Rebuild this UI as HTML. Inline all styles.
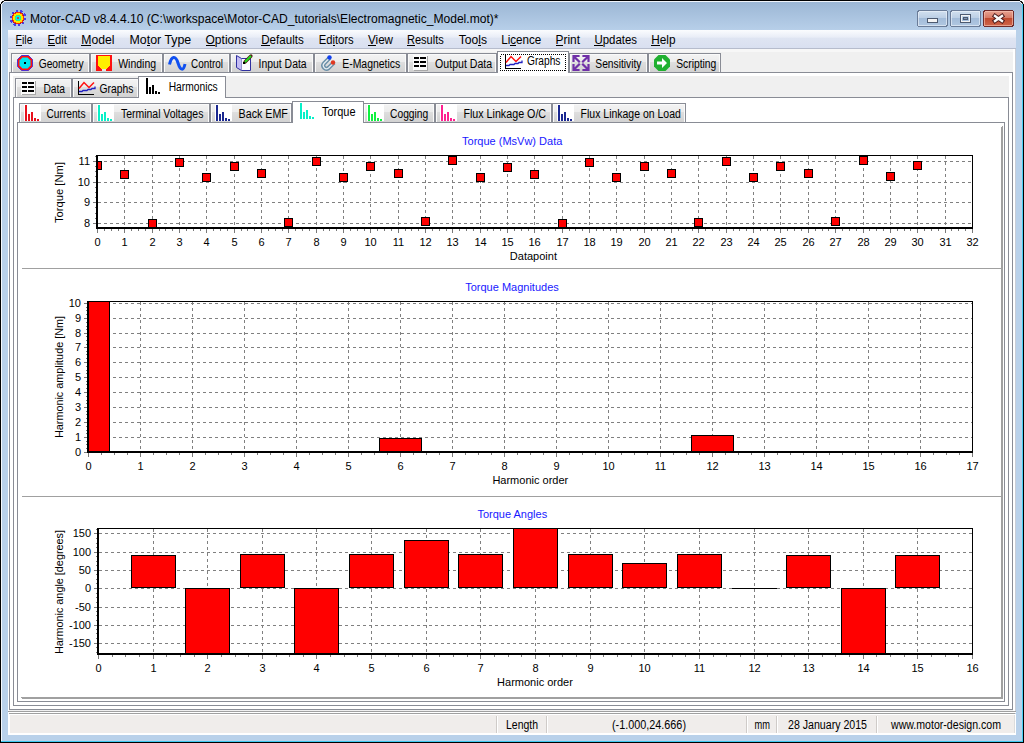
<!DOCTYPE html>
<html><head><meta charset="utf-8"><style>
html,body{margin:0;padding:0;width:1024px;height:743px;overflow:hidden;background:#b9d1ea}
svg{display:block;font-family:"Liberation Sans",sans-serif}
text{font-family:"Liberation Sans",sans-serif}
</style></head><body>
<svg width="1024" height="743" viewBox="0 0 1024 743" shape-rendering="crispEdges" text-rendering="optimizeLegibility">
<rect x="0" y="0" width="1024" height="743" fill="#000" />
<rect x="1" y="1" width="1022" height="741" fill="#b9d1ea" />
<rect x="1" y="1" width="1" height="741" fill="#f4f8fc" />
<defs><linearGradient id="tg" x1="0" y1="0" x2="0" y2="1"><stop offset="0" stop-color="#9bb6d4"/><stop offset="1" stop-color="#b7cfe9"/></linearGradient><linearGradient id="mg" x1="0" y1="0" x2="0" y2="1"><stop offset="0" stop-color="#fbfcfe"/><stop offset="0.4" stop-color="#e9edf7"/><stop offset="0.45" stop-color="#dfe5f2"/><stop offset="1" stop-color="#d9e0f0"/></linearGradient><linearGradient id="tab" x1="0" y1="0" x2="0" y2="1"><stop offset="0" stop-color="#f4f4f4"/><stop offset="0.48" stop-color="#ececec"/><stop offset="0.5" stop-color="#dedede"/><stop offset="1" stop-color="#d2d2d2"/></linearGradient><linearGradient id="btn" x1="0" y1="0" x2="0" y2="1"><stop offset="0" stop-color="#d3e1f0"/><stop offset="0.45" stop-color="#bccfe5"/><stop offset="0.5" stop-color="#a3bcd9"/><stop offset="1" stop-color="#b1c8e2"/></linearGradient><linearGradient id="cls" x1="0" y1="0" x2="0" y2="1"><stop offset="0" stop-color="#e8a493"/><stop offset="0.45" stop-color="#d77b66"/><stop offset="0.5" stop-color="#c04a2f"/><stop offset="1" stop-color="#d0674c"/></linearGradient></defs>
<rect x="2" y="1" width="1021" height="29" fill="url(#tg)" />
<rect x="1" y="1" width="1021" height="1" fill="#f0f4fa" />
<rect x="1022" y="1" width="1" height="741" fill="#48d0f4" />
<rect x="0" y="0" width="1" height="1" fill="#fff" />
<rect x="1023" y="0" width="1" height="1" fill="#fff" />
<rect x="1" y="0" width="1" height="1" fill="#fff" />
<rect x="1022" y="0" width="1" height="1" fill="#fff" />
<rect x="2" y="0" width="1" height="1" fill="#fff" />
<rect x="1021" y="0" width="1" height="1" fill="#fff" />
<rect x="3" y="0" width="1" height="1" fill="#e8e8e8" />
<rect x="1020" y="0" width="1" height="1" fill="#e8e8e8" />
<rect x="0" y="1" width="1" height="1" fill="#fff" />
<rect x="1023" y="1" width="1" height="1" fill="#fff" />
<rect x="1" y="1" width="1" height="1" fill="#f0f0f0" />
<rect x="1022" y="1" width="1" height="1" fill="#f0f0f0" />
<rect x="0" y="2" width="1" height="1" fill="#fff" />
<rect x="1023" y="2" width="1" height="1" fill="#fff" />
<rect x="0" y="3" width="1" height="1" fill="#e0e0e0" />
<rect x="1023" y="3" width="1" height="1" fill="#e0e0e0" />
<rect x="2" y="1" width="1" height="1" fill="#101010" />
<rect x="1021" y="1" width="1" height="1" fill="#101010" />
<rect x="3" y="1" width="1" height="1" fill="#202020" />
<rect x="1020" y="1" width="1" height="1" fill="#202020" />
<rect x="1" y="2" width="1" height="1" fill="#101010" />
<rect x="1022" y="2" width="1" height="1" fill="#101010" />
<rect x="1" y="3" width="1" height="1" fill="#202020" />
<rect x="1022" y="3" width="1" height="1" fill="#202020" />
<rect x="2" y="2" width="1" height="1" fill="#202020" />
<rect x="1021" y="2" width="1" height="1" fill="#202020" />
<rect x="3" y="2" width="1" height="1" fill="#e8f0f8" />
<rect x="1020" y="2" width="1" height="1" fill="#e8f0f8" />
<rect x="2" y="3" width="1" height="1" fill="#e8f0f8" />
<rect x="1021" y="3" width="1" height="1" fill="#e8f0f8" />
<rect x="16" y="10" width="1" height="1" fill="#4a40e8" />
<rect x="17" y="10" width="1" height="1" fill="#4a40e8" />
<rect x="20" y="10" width="1" height="1" fill="#4a40e8" />
<rect x="21" y="10" width="1" height="1" fill="#4a40e8" />
<rect x="16" y="11" width="1" height="1" fill="#4a40e8" />
<rect x="17" y="11" width="1" height="1" fill="#4a40e8" />
<rect x="20" y="11" width="1" height="1" fill="#4a40e8" />
<rect x="21" y="11" width="1" height="1" fill="#4a40e8" />
<rect x="22" y="11" width="1" height="1" fill="#4a40e8" />
<rect x="12" y="12" width="1" height="1" fill="#4a40e8" />
<rect x="13" y="12" width="1" height="1" fill="#4a40e8" />
<rect x="15" y="12" width="1" height="1" fill="#a01838" />
<rect x="16" y="12" width="1" height="1" fill="#ff3000" />
<rect x="17" y="12" width="1" height="1" fill="#ff3000" />
<rect x="18" y="12" width="1" height="1" fill="#ff3000" />
<rect x="19" y="12" width="1" height="1" fill="#ff3000" />
<rect x="20" y="12" width="1" height="1" fill="#a01838" />
<rect x="21" y="12" width="1" height="1" fill="#4a40e8" />
<rect x="12" y="13" width="1" height="1" fill="#4a40e8" />
<rect x="13" y="13" width="1" height="1" fill="#a01838" />
<rect x="14" y="13" width="1" height="1" fill="#ff3000" />
<rect x="15" y="13" width="1" height="1" fill="#ff3000" />
<rect x="16" y="13" width="1" height="1" fill="#ffe400" />
<rect x="17" y="13" width="1" height="1" fill="#ffe400" />
<rect x="18" y="13" width="1" height="1" fill="#ffe400" />
<rect x="19" y="13" width="1" height="1" fill="#ffe400" />
<rect x="20" y="13" width="1" height="1" fill="#ff3000" />
<rect x="21" y="13" width="1" height="1" fill="#ff3000" />
<rect x="22" y="13" width="1" height="1" fill="#a01838" />
<rect x="24" y="13" width="1" height="1" fill="#4a40e8" />
<rect x="13" y="14" width="1" height="1" fill="#ff3000" />
<rect x="14" y="14" width="1" height="1" fill="#ffe400" />
<rect x="15" y="14" width="1" height="1" fill="#ffe400" />
<rect x="16" y="14" width="1" height="1" fill="#ffe400" />
<rect x="17" y="14" width="1" height="1" fill="#ffe400" />
<rect x="18" y="14" width="1" height="1" fill="#ffe400" />
<rect x="19" y="14" width="1" height="1" fill="#ffe400" />
<rect x="20" y="14" width="1" height="1" fill="#ffe400" />
<rect x="21" y="14" width="1" height="1" fill="#ffe400" />
<rect x="22" y="14" width="1" height="1" fill="#ff3000" />
<rect x="23" y="14" width="1" height="1" fill="#4a40e8" />
<rect x="24" y="14" width="1" height="1" fill="#4a40e8" />
<rect x="25" y="14" width="1" height="1" fill="#4a40e8" />
<rect x="12" y="15" width="1" height="1" fill="#a01838" />
<rect x="13" y="15" width="1" height="1" fill="#ff3000" />
<rect x="14" y="15" width="1" height="1" fill="#ffe400" />
<rect x="15" y="15" width="1" height="1" fill="#ffe400" />
<rect x="16" y="15" width="1" height="1" fill="#30f080" />
<rect x="17" y="15" width="1" height="1" fill="#30f080" />
<rect x="18" y="15" width="1" height="1" fill="#30f080" />
<rect x="19" y="15" width="1" height="1" fill="#30f080" />
<rect x="20" y="15" width="1" height="1" fill="#ffe400" />
<rect x="21" y="15" width="1" height="1" fill="#ffe400" />
<rect x="22" y="15" width="1" height="1" fill="#ff3000" />
<rect x="23" y="15" width="1" height="1" fill="#a01838" />
<rect x="24" y="15" width="1" height="1" fill="#4a40e8" />
<rect x="25" y="15" width="1" height="1" fill="#4a40e8" />
<rect x="10" y="16" width="1" height="1" fill="#4a40e8" />
<rect x="11" y="16" width="1" height="1" fill="#4a40e8" />
<rect x="12" y="16" width="1" height="1" fill="#ff3000" />
<rect x="13" y="16" width="1" height="1" fill="#ffe400" />
<rect x="14" y="16" width="1" height="1" fill="#ffe400" />
<rect x="15" y="16" width="1" height="1" fill="#30f080" />
<rect x="16" y="16" width="1" height="1" fill="#00eef0" />
<rect x="17" y="16" width="1" height="1" fill="#00eef0" />
<rect x="18" y="16" width="1" height="1" fill="#00eef0" />
<rect x="19" y="16" width="1" height="1" fill="#00eef0" />
<rect x="20" y="16" width="1" height="1" fill="#30f080" />
<rect x="21" y="16" width="1" height="1" fill="#ffe400" />
<rect x="22" y="16" width="1" height="1" fill="#ffe400" />
<rect x="23" y="16" width="1" height="1" fill="#ff3000" />
<rect x="10" y="17" width="1" height="1" fill="#4a40e8" />
<rect x="11" y="17" width="1" height="1" fill="#4a40e8" />
<rect x="12" y="17" width="1" height="1" fill="#ff3000" />
<rect x="13" y="17" width="1" height="1" fill="#ffe400" />
<rect x="14" y="17" width="1" height="1" fill="#ffe400" />
<rect x="15" y="17" width="1" height="1" fill="#30f080" />
<rect x="16" y="17" width="1" height="1" fill="#00eef0" />
<rect x="17" y="17" width="1" height="1" fill="#b85050" />
<rect x="18" y="17" width="1" height="1" fill="#b85050" />
<rect x="19" y="17" width="1" height="1" fill="#00eef0" />
<rect x="20" y="17" width="1" height="1" fill="#30f080" />
<rect x="21" y="17" width="1" height="1" fill="#ffe400" />
<rect x="22" y="17" width="1" height="1" fill="#ffe400" />
<rect x="23" y="17" width="1" height="1" fill="#ff3000" />
<rect x="12" y="18" width="1" height="1" fill="#ff3000" />
<rect x="13" y="18" width="1" height="1" fill="#ffe400" />
<rect x="14" y="18" width="1" height="1" fill="#ffe400" />
<rect x="15" y="18" width="1" height="1" fill="#30f080" />
<rect x="16" y="18" width="1" height="1" fill="#00eef0" />
<rect x="17" y="18" width="1" height="1" fill="#b85050" />
<rect x="18" y="18" width="1" height="1" fill="#b85050" />
<rect x="19" y="18" width="1" height="1" fill="#00eef0" />
<rect x="20" y="18" width="1" height="1" fill="#30f080" />
<rect x="21" y="18" width="1" height="1" fill="#ffe400" />
<rect x="22" y="18" width="1" height="1" fill="#ffe400" />
<rect x="23" y="18" width="1" height="1" fill="#ff3000" />
<rect x="24" y="18" width="1" height="1" fill="#4a40e8" />
<rect x="25" y="18" width="1" height="1" fill="#4a40e8" />
<rect x="12" y="19" width="1" height="1" fill="#ff3000" />
<rect x="13" y="19" width="1" height="1" fill="#ffe400" />
<rect x="14" y="19" width="1" height="1" fill="#ffe400" />
<rect x="15" y="19" width="1" height="1" fill="#30f080" />
<rect x="16" y="19" width="1" height="1" fill="#00eef0" />
<rect x="17" y="19" width="1" height="1" fill="#00eef0" />
<rect x="18" y="19" width="1" height="1" fill="#00eef0" />
<rect x="19" y="19" width="1" height="1" fill="#00eef0" />
<rect x="20" y="19" width="1" height="1" fill="#30f080" />
<rect x="21" y="19" width="1" height="1" fill="#ffe400" />
<rect x="22" y="19" width="1" height="1" fill="#ffe400" />
<rect x="23" y="19" width="1" height="1" fill="#ff3000" />
<rect x="24" y="19" width="1" height="1" fill="#4a40e8" />
<rect x="25" y="19" width="1" height="1" fill="#4a40e8" />
<rect x="10" y="20" width="1" height="1" fill="#4a40e8" />
<rect x="11" y="20" width="1" height="1" fill="#4a40e8" />
<rect x="12" y="20" width="1" height="1" fill="#a01838" />
<rect x="13" y="20" width="1" height="1" fill="#ff3000" />
<rect x="14" y="20" width="1" height="1" fill="#ffe400" />
<rect x="15" y="20" width="1" height="1" fill="#ffe400" />
<rect x="16" y="20" width="1" height="1" fill="#30f080" />
<rect x="17" y="20" width="1" height="1" fill="#30f080" />
<rect x="18" y="20" width="1" height="1" fill="#30f080" />
<rect x="19" y="20" width="1" height="1" fill="#30f080" />
<rect x="20" y="20" width="1" height="1" fill="#ffe400" />
<rect x="21" y="20" width="1" height="1" fill="#ffe400" />
<rect x="22" y="20" width="1" height="1" fill="#ff3000" />
<rect x="23" y="20" width="1" height="1" fill="#a01838" />
<rect x="10" y="21" width="1" height="1" fill="#4a40e8" />
<rect x="11" y="21" width="1" height="1" fill="#4a40e8" />
<rect x="12" y="21" width="1" height="1" fill="#4a40e8" />
<rect x="13" y="21" width="1" height="1" fill="#ff3000" />
<rect x="14" y="21" width="1" height="1" fill="#ffe400" />
<rect x="15" y="21" width="1" height="1" fill="#ffe400" />
<rect x="16" y="21" width="1" height="1" fill="#ffe400" />
<rect x="17" y="21" width="1" height="1" fill="#ffe400" />
<rect x="18" y="21" width="1" height="1" fill="#ffe400" />
<rect x="19" y="21" width="1" height="1" fill="#ffe400" />
<rect x="20" y="21" width="1" height="1" fill="#ffe400" />
<rect x="21" y="21" width="1" height="1" fill="#ffe400" />
<rect x="22" y="21" width="1" height="1" fill="#ff3000" />
<rect x="11" y="22" width="1" height="1" fill="#4a40e8" />
<rect x="13" y="22" width="1" height="1" fill="#a01838" />
<rect x="14" y="22" width="1" height="1" fill="#ff3000" />
<rect x="15" y="22" width="1" height="1" fill="#ff3000" />
<rect x="16" y="22" width="1" height="1" fill="#ffe400" />
<rect x="17" y="22" width="1" height="1" fill="#ffe400" />
<rect x="18" y="22" width="1" height="1" fill="#ffe400" />
<rect x="19" y="22" width="1" height="1" fill="#ffe400" />
<rect x="20" y="22" width="1" height="1" fill="#ff3000" />
<rect x="21" y="22" width="1" height="1" fill="#ff3000" />
<rect x="22" y="22" width="1" height="1" fill="#a01838" />
<rect x="23" y="22" width="1" height="1" fill="#4a40e8" />
<rect x="14" y="23" width="1" height="1" fill="#4a40e8" />
<rect x="15" y="23" width="1" height="1" fill="#a01838" />
<rect x="16" y="23" width="1" height="1" fill="#ff3000" />
<rect x="17" y="23" width="1" height="1" fill="#ff3000" />
<rect x="18" y="23" width="1" height="1" fill="#ff3000" />
<rect x="19" y="23" width="1" height="1" fill="#ff3000" />
<rect x="20" y="23" width="1" height="1" fill="#a01838" />
<rect x="22" y="23" width="1" height="1" fill="#4a40e8" />
<rect x="23" y="23" width="1" height="1" fill="#4a40e8" />
<rect x="13" y="24" width="1" height="1" fill="#4a40e8" />
<rect x="14" y="24" width="1" height="1" fill="#4a40e8" />
<rect x="15" y="24" width="1" height="1" fill="#4a40e8" />
<rect x="18" y="24" width="1" height="1" fill="#4a40e8" />
<rect x="19" y="24" width="1" height="1" fill="#4a40e8" />
<rect x="14" y="25" width="1" height="1" fill="#4a40e8" />
<rect x="15" y="25" width="1" height="1" fill="#4a40e8" />
<rect x="18" y="25" width="1" height="1" fill="#4a40e8" />
<rect x="19" y="25" width="1" height="1" fill="#4a40e8" />
<text x="30" y="23" font-size="12" fill="#000" text-anchor="start" textLength="468.5" lengthAdjust="spacingAndGlyphs" >Motor-CAD v8.4.4.10 (C:\workspace\Motor-CAD_tutorials\Electromagnetic_Model.mot)*</text>
<rect x="917.5" y="10.5" width="30" height="16" rx="2.5" fill="url(#btn)" stroke="#6a7c98"/>
<rect x="950.5" y="10.5" width="30" height="16" rx="2.5" fill="url(#btn)" stroke="#6a7c98"/>
<rect x="983.5" y="10.5" width="30" height="16" rx="2.5" fill="url(#cls)" stroke="#6e2a2a"/>
<rect x="927.5" y="18.5" width="10" height="4" rx="1" fill="#f4f4f4" stroke="#4d5a70"/>
<rect x="960.5" y="14.5" width="10" height="8" rx="1" fill="none" stroke="#4d5a70" stroke-width="1"/>
<rect x="961.5" y="15.5" width="8" height="6" fill="none" stroke="#f4f4f4" stroke-width="1"/>
<rect x="963.5" y="17.5" width="4" height="2" fill="#7d94b4" stroke="#4d5a70"/>
<path d="M995,16 L1002,21 M1002,16 L995,21" stroke="#4a1818" stroke-width="4.4" stroke-linecap="square" shape-rendering="auto"/>
<path d="M995,16 L1002,21 M1002,16 L995,21" stroke="#fafafa" stroke-width="2.4" stroke-linecap="square" shape-rendering="auto"/>
<rect x="918.5" y="11.5" width="28" height="14" rx="1.5" fill="none" stroke="#eef4fa" stroke-opacity="0.6"/>
<rect x="951.5" y="11.5" width="28" height="14" rx="1.5" fill="none" stroke="#eef4fa" stroke-opacity="0.6"/>
<rect x="984.5" y="11.5" width="28" height="14" rx="1.5" fill="none" stroke="#f8c8b8" stroke-opacity="0.6"/>
<rect x="8" y="30" width="1008" height="18" fill="url(#mg)" />
<rect x="8" y="48" width="1008" height="1" fill="#b6bccc" />
<text x="15.5" y="44" font-size="12" fill="#000" text-anchor="start" textLength="17.0" lengthAdjust="spacingAndGlyphs" >File</text>
<text x="47.5" y="44" font-size="12" fill="#000" text-anchor="start" textLength="19.5" lengthAdjust="spacingAndGlyphs" >Edit</text>
<text x="81.25" y="44" font-size="12" fill="#000" text-anchor="start" textLength="33.25" lengthAdjust="spacingAndGlyphs" >Model</text>
<text x="129.5" y="44" font-size="12" fill="#000" text-anchor="start" textLength="61.75" lengthAdjust="spacingAndGlyphs" >Motor Type</text>
<text x="205.5" y="44" font-size="12" fill="#000" text-anchor="start" textLength="41.5" lengthAdjust="spacingAndGlyphs" >Options</text>
<text x="261.25" y="44" font-size="12" fill="#000" text-anchor="start" textLength="42.5" lengthAdjust="spacingAndGlyphs" >Defaults</text>
<text x="318.75" y="44" font-size="12" fill="#000" text-anchor="start" textLength="35.0" lengthAdjust="spacingAndGlyphs" >Editors</text>
<text x="368" y="44" font-size="12" fill="#000" text-anchor="start" textLength="25" lengthAdjust="spacingAndGlyphs" >View</text>
<text x="407" y="44" font-size="12" fill="#000" text-anchor="start" textLength="36.75" lengthAdjust="spacingAndGlyphs" >Results</text>
<text x="458.75" y="44" font-size="12" fill="#000" text-anchor="start" textLength="28.25" lengthAdjust="spacingAndGlyphs" >Tools</text>
<text x="501.25" y="44" font-size="12" fill="#000" text-anchor="start" textLength="40.0" lengthAdjust="spacingAndGlyphs" >Licence</text>
<text x="555.5" y="44" font-size="12" fill="#000" text-anchor="start" textLength="24.5" lengthAdjust="spacingAndGlyphs" >Print</text>
<text x="594.5" y="44" font-size="12" fill="#000" text-anchor="start" textLength="42.5" lengthAdjust="spacingAndGlyphs" >Updates</text>
<text x="651.25" y="44" font-size="12" fill="#000" text-anchor="start" textLength="24.25" lengthAdjust="spacingAndGlyphs" >Help</text>
<rect x="16" y="45" width="6" height="1" fill="#000" />
<rect x="48" y="45" width="7" height="1" fill="#000" />
<rect x="81" y="45" width="10" height="1" fill="#000" />
<rect x="147" y="45" width="3" height="1" fill="#000" />
<rect x="206" y="45" width="9" height="1" fill="#000" />
<rect x="261" y="45" width="9" height="1" fill="#000" />
<rect x="333" y="45" width="2" height="1" fill="#000" />
<rect x="368" y="45" width="8" height="1" fill="#000" />
<rect x="407" y="45" width="8" height="1" fill="#000" />
<rect x="478" y="45" width="3" height="1" fill="#000" />
<rect x="510" y="45" width="6" height="1" fill="#000" />
<rect x="556" y="45" width="7" height="1" fill="#000" />
<rect x="594" y="45" width="9" height="1" fill="#000" />
<rect x="651" y="45" width="9" height="1" fill="#000" />
<rect x="8" y="49" width="1008" height="664" fill="#f0f0f0" />
<rect x="8" y="49" width="1008" height="3" fill="#f7f7f7" />
<rect x="1015" y="49" width="1" height="664" fill="#c9cdd6" />
<rect x="10" y="73" width="1002" height="636" fill="#f0f0f0" />
<rect x="9" y="72" width="1004" height="1" fill="#898c95" />
<rect x="9" y="709" width="1004" height="1" fill="#898c95" />
<rect x="9" y="72" width="1" height="638" fill="#898c95" />
<rect x="1012" y="72" width="1" height="638" fill="#898c95" />
<rect x="10" y="73" width="1002" height="3" fill="#ffffff" />
<rect x="10" y="73" width="3" height="636" fill="#ffffff" />
<rect x="1009" y="73" width="3" height="636" fill="#ffffff" />
<rect x="10" y="706" width="1002" height="3" fill="#ffffff" />
<rect x="8" y="49" width="1" height="686" fill="#ffffff" />
<rect x="1013" y="49" width="2" height="686" fill="#ffffff" />
<rect x="13" y="97" width="996" height="1" fill="#898c95" />
<rect x="13" y="705" width="996" height="1" fill="#898c95" />
<rect x="13" y="97" width="1" height="609" fill="#898c95" />
<rect x="1008" y="97" width="1" height="609" fill="#898c95" />
<rect x="14" y="98" width="994" height="607" fill="#ffffff" />
<rect x="17" y="122" width="988" height="1" fill="#898c95" />
<rect x="17" y="701" width="988" height="1" fill="#898c95" />
<rect x="17" y="122" width="1" height="580" fill="#898c95" />
<rect x="1004" y="122" width="1" height="580" fill="#898c95" />
<rect x="18" y="123" width="986" height="578" fill="#ffffff" />
<rect x="11" y="53" width="79" height="19" fill="url(#tab)" />
<rect x="12" y="54" width="77" height="1" fill="#fafafa" />
<rect x="12" y="54" width="1" height="18" fill="#fafafa" />
<rect x="88" y="54" width="1" height="18" fill="#fafafa" />
<rect x="11" y="53" width="79" height="1" fill="#898c95" />
<rect x="11" y="53" width="1" height="19" fill="#898c95" />
<rect x="89" y="53" width="1" height="19" fill="#898c95" />
<rect x="11" y="72" width="79" height="1" fill="#898c95" />
<path d="M21.5,55.5 h7 l4,4 v7 l-4,4 h-7 l-4,-4 v-7 z" fill="#ff1010" stroke="#5030d0" stroke-width="1" shape-rendering="auto"/>
<path d="M22.5,57.5 h5 l3,3 v5 l-3,3 h-5 l-3,-3 v-5 z" fill="#00e8f0" shape-rendering="auto"/>
<rect x="24" y="62" width="2" height="2" fill="#000" />
<text x="38.7" y="68" font-size="12" fill="#000" text-anchor="start" textLength="44.9" lengthAdjust="spacingAndGlyphs" >Geometry</text>
<rect x="90" y="53" width="73" height="19" fill="url(#tab)" />
<rect x="91" y="54" width="71" height="1" fill="#fafafa" />
<rect x="91" y="54" width="1" height="18" fill="#fafafa" />
<rect x="161" y="54" width="1" height="18" fill="#fafafa" />
<rect x="90" y="53" width="73" height="1" fill="#898c95" />
<rect x="90" y="53" width="1" height="19" fill="#898c95" />
<rect x="162" y="53" width="1" height="19" fill="#898c95" />
<rect x="90" y="72" width="73" height="1" fill="#898c95" />
<rect x="96" y="55" width="16" height="16" fill="#ff1010" />
<path d="M98,56 h12 v9 l-3,4 h-6 l-3,-4 z" fill="#ffee00"/>
<rect x="102" y="69" width="4" height="2" fill="#e6e6e6" />
<text x="118.2" y="68" font-size="12" fill="#000" text-anchor="start" textLength="37.9" lengthAdjust="spacingAndGlyphs" >Winding</text>
<rect x="163" y="53" width="67" height="19" fill="url(#tab)" />
<rect x="164" y="54" width="65" height="1" fill="#fafafa" />
<rect x="164" y="54" width="1" height="18" fill="#fafafa" />
<rect x="228" y="54" width="1" height="18" fill="#fafafa" />
<rect x="163" y="53" width="67" height="1" fill="#898c95" />
<rect x="163" y="53" width="1" height="19" fill="#898c95" />
<rect x="229" y="53" width="1" height="19" fill="#898c95" />
<rect x="163" y="72" width="67" height="1" fill="#898c95" />
<path d="M169.5,64.5 C171.5,56 175.5,55 178,63 C180.5,71 183.5,71 185,64" fill="none" stroke="#1050f0" stroke-width="3" shape-rendering="auto"/>
<text x="191" y="68" font-size="12" fill="#000" text-anchor="start" textLength="32" lengthAdjust="spacingAndGlyphs" >Control</text>
<rect x="230" y="53" width="84" height="19" fill="url(#tab)" />
<rect x="231" y="54" width="82" height="1" fill="#fafafa" />
<rect x="231" y="54" width="1" height="18" fill="#fafafa" />
<rect x="312" y="54" width="1" height="18" fill="#fafafa" />
<rect x="230" y="53" width="84" height="1" fill="#898c95" />
<rect x="230" y="53" width="1" height="19" fill="#898c95" />
<rect x="313" y="53" width="1" height="19" fill="#898c95" />
<rect x="230" y="72" width="84" height="1" fill="#898c95" />
<path d="M236.5,55.5 L241.5,58.5 L241.5,70.5 L236.5,67.5 Z" fill="#c4bcf4" stroke="#3030a0" shape-rendering="auto"/>
<path d="M241.5,58.5 h9 v12 h-9" fill="#fafaff" stroke="#3030a0" shape-rendering="auto"/>
<path d="M245,62 l6,-6" stroke="#502010" stroke-width="3.2" stroke-linecap="round" shape-rendering="auto"/>
<path d="M245,62 l6,-6" stroke="#20e020" stroke-width="1.8" shape-rendering="auto"/>
<rect x="243" y="62" width="2" height="2" fill="#000" />
<text x="258.6" y="68" font-size="12" fill="#000" text-anchor="start" textLength="48" lengthAdjust="spacingAndGlyphs" >Input Data</text>
<rect x="314" y="53" width="93" height="19" fill="url(#tab)" />
<rect x="315" y="54" width="91" height="1" fill="#fafafa" />
<rect x="315" y="54" width="1" height="18" fill="#fafafa" />
<rect x="405" y="54" width="1" height="18" fill="#fafafa" />
<rect x="314" y="53" width="93" height="1" fill="#898c95" />
<rect x="314" y="53" width="1" height="19" fill="#898c95" />
<rect x="406" y="53" width="1" height="19" fill="#898c95" />
<rect x="314" y="72" width="93" height="1" fill="#898c95" />
<path d="M329.5,58 L324,63.5 a3.2,3.2 0 0 0 4.5,4.5 L334,62.5" fill="none" stroke="#6a90a8" stroke-width="4.2" shape-rendering="auto"/>
<path d="M329.5,58 L324,63.5 a3.2,3.2 0 0 0 4.5,4.5 L334,62.5" fill="none" stroke="#e8eef2" stroke-width="1.2" shape-rendering="auto"/>
<circle cx="329.5" cy="57.5" r="2.2" fill="#1040f0" shape-rendering="auto"/>
<circle cx="333" cy="62.5" r="2.2" fill="#e03820" shape-rendering="auto"/>
<text x="342.2" y="68" font-size="12" fill="#000" text-anchor="start" textLength="58.1" lengthAdjust="spacingAndGlyphs" >E-Magnetics</text>
<rect x="407" y="53" width="90" height="19" fill="url(#tab)" />
<rect x="408" y="54" width="88" height="1" fill="#fafafa" />
<rect x="408" y="54" width="1" height="18" fill="#fafafa" />
<rect x="495" y="54" width="1" height="18" fill="#fafafa" />
<rect x="407" y="53" width="90" height="1" fill="#898c95" />
<rect x="407" y="53" width="1" height="19" fill="#898c95" />
<rect x="496" y="53" width="1" height="19" fill="#898c95" />
<rect x="407" y="72" width="90" height="1" fill="#898c95" />
<rect x="413" y="55" width="15" height="15" fill="#fbfbfb" />
<rect x="427" y="56" width="1" height="15" fill="#a8a8a8" />
<rect x="414" y="70" width="14" height="1" fill="#a8a8a8" />
<rect x="414" y="57" width="5" height="2" fill="#000" />
<rect x="420" y="57" width="6" height="2" fill="#000" />
<rect x="414" y="61" width="5" height="2" fill="#000" />
<rect x="420" y="61" width="6" height="2" fill="#000" />
<rect x="414" y="65" width="5" height="2" fill="#000" />
<rect x="420" y="65" width="6" height="2" fill="#000" />
<text x="435.1" y="68" font-size="12" fill="#000" text-anchor="start" textLength="57.1" lengthAdjust="spacingAndGlyphs" >Output Data</text>
<rect x="569" y="53" width="79" height="19" fill="url(#tab)" />
<rect x="570" y="54" width="77" height="1" fill="#fafafa" />
<rect x="570" y="54" width="1" height="18" fill="#fafafa" />
<rect x="646" y="54" width="1" height="18" fill="#fafafa" />
<rect x="569" y="53" width="79" height="1" fill="#898c95" />
<rect x="569" y="53" width="1" height="19" fill="#898c95" />
<rect x="647" y="53" width="1" height="19" fill="#898c95" />
<rect x="569" y="72" width="79" height="1" fill="#898c95" />
<g stroke="#7030a8" stroke-width="2.2" fill="none" stroke-linecap="square" shape-rendering="auto"><path d="M573.5,61 V56 H578.5 M574.5,57 L579,61.5"/><path d="M588.5,61 V56 H583.5 M587.5,57 L583,61.5"/><path d="M573.5,65 V70 H578.5 M574.5,69 L579,64.5"/><path d="M588.5,65 V70 H583.5 M587.5,69 L583,64.5"/></g>
<text x="595.3" y="68" font-size="12" fill="#000" text-anchor="start" textLength="46.2" lengthAdjust="spacingAndGlyphs" >Sensitivity</text>
<rect x="648" y="53" width="73" height="19" fill="url(#tab)" />
<rect x="649" y="54" width="71" height="1" fill="#fafafa" />
<rect x="649" y="54" width="1" height="18" fill="#fafafa" />
<rect x="719" y="54" width="1" height="18" fill="#fafafa" />
<rect x="648" y="53" width="73" height="1" fill="#898c95" />
<rect x="648" y="53" width="1" height="19" fill="#898c95" />
<rect x="720" y="53" width="1" height="19" fill="#898c95" />
<rect x="648" y="72" width="73" height="1" fill="#898c95" />
<path d="M658.5,55 h7 l4.5,4.5 v7 l-4.5,4.5 h-7 l-4.5,-4.5 v-7 z" fill="#20b030" shape-rendering="auto"/>
<path d="M657,61.5 h5 v-3.5 l5,5 l-5,5 v-3.5 h-5 z" fill="#fff" shape-rendering="auto"/>
<text x="676.2" y="68" font-size="12" fill="#000" text-anchor="start" textLength="40.1" lengthAdjust="spacingAndGlyphs" >Scripting</text>
<rect x="497" y="51" width="72" height="22" fill="#ffffff" />
<rect x="497" y="51" width="72" height="1" fill="#898c95" />
<rect x="497" y="51" width="1" height="22" fill="#898c95" />
<rect x="568" y="51" width="1" height="22" fill="#898c95" />
<rect x="505" y="55" width="1" height="14" fill="#000" />
<rect x="505" y="68" width="16" height="1" fill="#000" />
<path d="M506,62.5 l5,-6 l5,5 l5,-5" fill="none" stroke="#ff1010" stroke-width="1.5" shape-rendering="auto"/>
<path d="M506,65.5 h3 l1,-1 h4 l1,-1 h3 l1,-1 h3 v-2" fill="none" stroke="#2020c0" stroke-width="1.3" shape-rendering="auto"/>
<text x="527" y="65" font-size="12" fill="#000" text-anchor="start" textLength="33.4" lengthAdjust="spacingAndGlyphs" >Graphs</text>
<rect x="498" y="72" width="70" height="1" fill="#ffffff" />
<rect x="500.5" y="54.5" width="65" height="16" fill="none" stroke="#000" stroke-dasharray="1 1"/>
<rect x="9" y="72" width="489" height="1" fill="#898c95" />
<rect x="569" y="72" width="444" height="1" fill="#898c95" />
<rect x="15" y="78" width="57" height="19" fill="url(#tab)" />
<rect x="16" y="79" width="55" height="1" fill="#fafafa" />
<rect x="16" y="79" width="1" height="18" fill="#fafafa" />
<rect x="70" y="79" width="1" height="18" fill="#fafafa" />
<rect x="15" y="78" width="57" height="1" fill="#898c95" />
<rect x="15" y="78" width="1" height="19" fill="#898c95" />
<rect x="71" y="78" width="1" height="19" fill="#898c95" />
<rect x="15" y="97" width="57" height="1" fill="#898c95" />
<rect x="21" y="80" width="15" height="15" fill="#fbfbfb" />
<rect x="35" y="81" width="1" height="14" fill="#a8a8a8" />
<rect x="22" y="94" width="14" height="1" fill="#a8a8a8" />
<rect x="22" y="82" width="5" height="2" fill="#000" />
<rect x="28" y="82" width="6" height="2" fill="#000" />
<rect x="22" y="86" width="5" height="2" fill="#000" />
<rect x="28" y="86" width="6" height="2" fill="#000" />
<rect x="22" y="90" width="5" height="2" fill="#000" />
<rect x="28" y="90" width="6" height="2" fill="#000" />
<text x="43.4" y="93" font-size="12" fill="#000" text-anchor="start" textLength="21.6" lengthAdjust="spacingAndGlyphs" >Data</text>
<rect x="72" y="78" width="67" height="19" fill="url(#tab)" />
<rect x="73" y="79" width="65" height="1" fill="#fafafa" />
<rect x="73" y="79" width="1" height="18" fill="#fafafa" />
<rect x="137" y="79" width="1" height="18" fill="#fafafa" />
<rect x="72" y="78" width="67" height="1" fill="#898c95" />
<rect x="72" y="78" width="1" height="19" fill="#898c95" />
<rect x="138" y="78" width="1" height="19" fill="#898c95" />
<rect x="72" y="97" width="67" height="1" fill="#898c95" />
<rect x="78" y="81" width="1" height="14" fill="#000" />
<rect x="78" y="94" width="16" height="1" fill="#000" />
<path d="M79,88.5 l5,-6 l5,5 l5,-5" fill="none" stroke="#ff1010" stroke-width="1.5" shape-rendering="auto"/>
<path d="M79,91.5 h3 l1,-1 h4 l1,-1 h3 l1,-1 h3 v-2" fill="none" stroke="#2020c0" stroke-width="1.3" shape-rendering="auto"/>
<text x="99.6" y="93" font-size="12" fill="#000" text-anchor="start" textLength="33.8" lengthAdjust="spacingAndGlyphs" >Graphs</text>
<rect x="138" y="76" width="88" height="22" fill="#ffffff" />
<rect x="138" y="76" width="88" height="1" fill="#898c95" />
<rect x="138" y="76" width="1" height="22" fill="#898c95" />
<rect x="225" y="76" width="1" height="22" fill="#898c95" />
<rect x="145" y="77" width="17" height="17" fill="#ffffff" />
<rect x="146" y="78" width="2" height="16" fill="#000" />
<rect x="149" y="87" width="2" height="7" fill="#000" />
<rect x="152" y="85" width="2" height="9" fill="#000" />
<rect x="155" y="91" width="2" height="3" fill="#000" />
<rect x="158" y="92" width="2" height="2" fill="#000" />
<text x="168.7" y="91" font-size="12" fill="#000" text-anchor="start" textLength="49" lengthAdjust="spacingAndGlyphs" >Harmonics</text>
<rect x="139" y="97" width="86" height="1" fill="#ffffff" />
<rect x="19" y="103" width="73" height="19" fill="url(#tab)" />
<rect x="20" y="104" width="71" height="1" fill="#fafafa" />
<rect x="20" y="104" width="1" height="18" fill="#fafafa" />
<rect x="90" y="104" width="1" height="18" fill="#fafafa" />
<rect x="19" y="103" width="73" height="1" fill="#898c95" />
<rect x="19" y="103" width="1" height="19" fill="#898c95" />
<rect x="91" y="103" width="1" height="19" fill="#898c95" />
<rect x="19" y="122" width="73" height="1" fill="#898c95" />
<rect x="24" y="104" width="17" height="17" fill="#ffffff" />
<rect x="25" y="105" width="2" height="16" fill="#e8101c" />
<rect x="28" y="114" width="2" height="7" fill="#e8101c" />
<rect x="31" y="112" width="2" height="9" fill="#e8101c" />
<rect x="34" y="118" width="2" height="3" fill="#e8101c" />
<rect x="37" y="119" width="2" height="2" fill="#e8101c" />
<text x="46.5" y="118" font-size="12" fill="#000" text-anchor="start" textLength="39" lengthAdjust="spacingAndGlyphs" >Currents</text>
<rect x="92" y="103" width="118" height="19" fill="url(#tab)" />
<rect x="93" y="104" width="116" height="1" fill="#fafafa" />
<rect x="93" y="104" width="1" height="18" fill="#fafafa" />
<rect x="208" y="104" width="1" height="18" fill="#fafafa" />
<rect x="92" y="103" width="118" height="1" fill="#898c95" />
<rect x="92" y="103" width="1" height="19" fill="#898c95" />
<rect x="209" y="103" width="1" height="19" fill="#898c95" />
<rect x="92" y="122" width="118" height="1" fill="#898c95" />
<rect x="97" y="104" width="17" height="17" fill="#ffffff" />
<rect x="98" y="105" width="2" height="16" fill="#08f0c8" />
<rect x="101" y="114" width="2" height="7" fill="#08f0c8" />
<rect x="104" y="112" width="2" height="9" fill="#08f0c8" />
<rect x="107" y="118" width="2" height="3" fill="#08f0c8" />
<rect x="110" y="119" width="2" height="2" fill="#08f0c8" />
<text x="121" y="118" font-size="12" fill="#000" text-anchor="start" textLength="82.4" lengthAdjust="spacingAndGlyphs" >Terminal Voltages</text>
<rect x="210" y="103" width="82" height="19" fill="url(#tab)" />
<rect x="211" y="104" width="80" height="1" fill="#fafafa" />
<rect x="211" y="104" width="1" height="18" fill="#fafafa" />
<rect x="290" y="104" width="1" height="18" fill="#fafafa" />
<rect x="210" y="103" width="82" height="1" fill="#898c95" />
<rect x="210" y="103" width="1" height="19" fill="#898c95" />
<rect x="291" y="103" width="1" height="19" fill="#898c95" />
<rect x="210" y="122" width="82" height="1" fill="#898c95" />
<rect x="215" y="104" width="17" height="17" fill="#ffffff" />
<rect x="216" y="105" width="2" height="16" fill="#1a2890" />
<rect x="219" y="114" width="2" height="7" fill="#1a2890" />
<rect x="222" y="112" width="2" height="9" fill="#1a2890" />
<rect x="225" y="118" width="2" height="3" fill="#1a2890" />
<rect x="228" y="119" width="2" height="2" fill="#1a2890" />
<text x="238.6" y="118" font-size="12" fill="#000" text-anchor="start" textLength="49.3" lengthAdjust="spacingAndGlyphs" >Back EMF</text>
<rect x="363" y="103" width="72" height="19" fill="url(#tab)" />
<rect x="364" y="104" width="70" height="1" fill="#fafafa" />
<rect x="364" y="104" width="1" height="18" fill="#fafafa" />
<rect x="433" y="104" width="1" height="18" fill="#fafafa" />
<rect x="363" y="103" width="72" height="1" fill="#898c95" />
<rect x="363" y="103" width="1" height="19" fill="#898c95" />
<rect x="434" y="103" width="1" height="19" fill="#898c95" />
<rect x="363" y="122" width="72" height="1" fill="#898c95" />
<rect x="367" y="104" width="17" height="17" fill="#ffffff" />
<rect x="368" y="105" width="2" height="16" fill="#10f040" />
<rect x="371" y="114" width="2" height="7" fill="#10f040" />
<rect x="374" y="112" width="2" height="9" fill="#10f040" />
<rect x="377" y="118" width="2" height="3" fill="#10f040" />
<rect x="380" y="119" width="2" height="2" fill="#10f040" />
<text x="390" y="118" font-size="12" fill="#000" text-anchor="start" textLength="38.3" lengthAdjust="spacingAndGlyphs" >Cogging</text>
<rect x="435" y="103" width="117" height="19" fill="url(#tab)" />
<rect x="436" y="104" width="115" height="1" fill="#fafafa" />
<rect x="436" y="104" width="1" height="18" fill="#fafafa" />
<rect x="550" y="104" width="1" height="18" fill="#fafafa" />
<rect x="435" y="103" width="117" height="1" fill="#898c95" />
<rect x="435" y="103" width="1" height="19" fill="#898c95" />
<rect x="551" y="103" width="1" height="19" fill="#898c95" />
<rect x="435" y="122" width="117" height="1" fill="#898c95" />
<rect x="440" y="104" width="17" height="17" fill="#ffffff" />
<rect x="441" y="105" width="2" height="16" fill="#ff2090" />
<rect x="444" y="114" width="2" height="7" fill="#ff2090" />
<rect x="447" y="112" width="2" height="9" fill="#ff2090" />
<rect x="450" y="118" width="2" height="3" fill="#ff2090" />
<rect x="453" y="119" width="2" height="2" fill="#ff2090" />
<text x="463.4" y="118" font-size="12" fill="#000" text-anchor="start" textLength="82.7" lengthAdjust="spacingAndGlyphs" >Flux Linkage O/C</text>
<rect x="552" y="103" width="134" height="19" fill="url(#tab)" />
<rect x="553" y="104" width="132" height="1" fill="#fafafa" />
<rect x="553" y="104" width="1" height="18" fill="#fafafa" />
<rect x="684" y="104" width="1" height="18" fill="#fafafa" />
<rect x="552" y="103" width="134" height="1" fill="#898c95" />
<rect x="552" y="103" width="1" height="19" fill="#898c95" />
<rect x="685" y="103" width="1" height="19" fill="#898c95" />
<rect x="552" y="122" width="134" height="1" fill="#898c95" />
<rect x="557" y="104" width="17" height="17" fill="#ffffff" />
<rect x="558" y="105" width="2" height="16" fill="#1a2890" />
<rect x="561" y="114" width="2" height="7" fill="#1a2890" />
<rect x="564" y="112" width="2" height="9" fill="#1a2890" />
<rect x="567" y="118" width="2" height="3" fill="#1a2890" />
<rect x="570" y="119" width="2" height="2" fill="#1a2890" />
<text x="580.6" y="118" font-size="12" fill="#000" text-anchor="start" textLength="100.2" lengthAdjust="spacingAndGlyphs" >Flux Linkage on Load</text>
<rect x="292" y="101" width="72" height="22" fill="#ffffff" />
<rect x="292" y="101" width="72" height="1" fill="#898c95" />
<rect x="292" y="101" width="1" height="22" fill="#898c95" />
<rect x="363" y="101" width="1" height="22" fill="#898c95" />
<rect x="299" y="102" width="17" height="17" fill="#ffffff" />
<rect x="300" y="103" width="2" height="16" fill="#08f0c8" />
<rect x="303" y="112" width="2" height="7" fill="#08f0c8" />
<rect x="306" y="110" width="2" height="9" fill="#08f0c8" />
<rect x="309" y="116" width="2" height="3" fill="#08f0c8" />
<rect x="312" y="117" width="2" height="2" fill="#08f0c8" />
<text x="322" y="115.5" font-size="12" fill="#000" text-anchor="start" textLength="33.5" lengthAdjust="spacingAndGlyphs" >Torque</text>
<rect x="293" y="122" width="70" height="1" fill="#ffffff" />
<rect x="1001" y="127" width="1" height="572" fill="#a0a0a0" />
<rect x="1002" y="126" width="1" height="573" fill="#a0a0a0" />
<rect x="21" y="697" width="982" height="1" fill="#a0a0a0" />
<rect x="22" y="698" width="981" height="1" fill="#a0a0a0" />
<rect x="22" y="268" width="980" height="1" fill="#a0a0a0" />
<rect x="22" y="496" width="980" height="1" fill="#a0a0a0" />
<g font-family="Liberation Sans, sans-serif">
<line x1="124.5" y1="156" x2="124.5" y2="227" stroke="#808080" stroke-dasharray="3 3"/>
<line x1="152.5" y1="156" x2="152.5" y2="227" stroke="#808080" stroke-dasharray="3 3"/>
<line x1="179.5" y1="156" x2="179.5" y2="227" stroke="#808080" stroke-dasharray="3 3"/>
<line x1="206.5" y1="156" x2="206.5" y2="227" stroke="#808080" stroke-dasharray="3 3"/>
<line x1="234.5" y1="156" x2="234.5" y2="227" stroke="#808080" stroke-dasharray="3 3"/>
<line x1="261.5" y1="156" x2="261.5" y2="227" stroke="#808080" stroke-dasharray="3 3"/>
<line x1="288.5" y1="156" x2="288.5" y2="227" stroke="#808080" stroke-dasharray="3 3"/>
<line x1="316.5" y1="156" x2="316.5" y2="227" stroke="#808080" stroke-dasharray="3 3"/>
<line x1="343.5" y1="156" x2="343.5" y2="227" stroke="#808080" stroke-dasharray="3 3"/>
<line x1="370.5" y1="156" x2="370.5" y2="227" stroke="#808080" stroke-dasharray="3 3"/>
<line x1="398.5" y1="156" x2="398.5" y2="227" stroke="#808080" stroke-dasharray="3 3"/>
<line x1="425.5" y1="156" x2="425.5" y2="227" stroke="#808080" stroke-dasharray="3 3"/>
<line x1="452.5" y1="156" x2="452.5" y2="227" stroke="#808080" stroke-dasharray="3 3"/>
<line x1="480.5" y1="156" x2="480.5" y2="227" stroke="#808080" stroke-dasharray="3 3"/>
<line x1="507.5" y1="156" x2="507.5" y2="227" stroke="#808080" stroke-dasharray="3 3"/>
<line x1="534.5" y1="156" x2="534.5" y2="227" stroke="#808080" stroke-dasharray="3 3"/>
<line x1="562.5" y1="156" x2="562.5" y2="227" stroke="#808080" stroke-dasharray="3 3"/>
<line x1="589.5" y1="156" x2="589.5" y2="227" stroke="#808080" stroke-dasharray="3 3"/>
<line x1="616.5" y1="156" x2="616.5" y2="227" stroke="#808080" stroke-dasharray="3 3"/>
<line x1="644.5" y1="156" x2="644.5" y2="227" stroke="#808080" stroke-dasharray="3 3"/>
<line x1="671.5" y1="156" x2="671.5" y2="227" stroke="#808080" stroke-dasharray="3 3"/>
<line x1="698.5" y1="156" x2="698.5" y2="227" stroke="#808080" stroke-dasharray="3 3"/>
<line x1="726.5" y1="156" x2="726.5" y2="227" stroke="#808080" stroke-dasharray="3 3"/>
<line x1="753.5" y1="156" x2="753.5" y2="227" stroke="#808080" stroke-dasharray="3 3"/>
<line x1="780.5" y1="156" x2="780.5" y2="227" stroke="#808080" stroke-dasharray="3 3"/>
<line x1="808.5" y1="156" x2="808.5" y2="227" stroke="#808080" stroke-dasharray="3 3"/>
<line x1="835.5" y1="156" x2="835.5" y2="227" stroke="#808080" stroke-dasharray="3 3"/>
<line x1="863.5" y1="156" x2="863.5" y2="227" stroke="#808080" stroke-dasharray="3 3"/>
<line x1="890.5" y1="156" x2="890.5" y2="227" stroke="#808080" stroke-dasharray="3 3"/>
<line x1="917.5" y1="156" x2="917.5" y2="227" stroke="#808080" stroke-dasharray="3 3"/>
<line x1="945.5" y1="156" x2="945.5" y2="227" stroke="#808080" stroke-dasharray="3 3"/>
<line x1="98" y1="161.5" x2="972" y2="161.5" stroke="#808080" stroke-dasharray="3 3"/>
<line x1="98" y1="182.5" x2="972" y2="182.5" stroke="#808080" stroke-dasharray="3 3"/>
<line x1="98" y1="202.5" x2="972" y2="202.5" stroke="#808080" stroke-dasharray="3 3"/>
<line x1="98" y1="223.5" x2="972" y2="223.5" stroke="#808080" stroke-dasharray="3 3"/>
<g>
<rect x="98" y="161" width="4" height="9" fill="#000" />
<rect x="98" y="162" width="3" height="7" fill="#ff0000" />
<rect x="120" y="170" width="9" height="9" fill="#000" />
<rect x="121" y="171" width="7" height="7" fill="#ff0000" />
<rect x="148" y="219" width="9" height="9" fill="#000" />
<rect x="149" y="220" width="7" height="7" fill="#ff0000" />
<rect x="175" y="158" width="9" height="9" fill="#000" />
<rect x="176" y="159" width="7" height="7" fill="#ff0000" />
<rect x="202" y="173" width="9" height="9" fill="#000" />
<rect x="203" y="174" width="7" height="7" fill="#ff0000" />
<rect x="230" y="162" width="9" height="9" fill="#000" />
<rect x="231" y="163" width="7" height="7" fill="#ff0000" />
<rect x="257" y="169" width="9" height="9" fill="#000" />
<rect x="258" y="170" width="7" height="7" fill="#ff0000" />
<rect x="284" y="218" width="9" height="9" fill="#000" />
<rect x="285" y="219" width="7" height="7" fill="#ff0000" />
<rect x="312" y="157" width="9" height="9" fill="#000" />
<rect x="313" y="158" width="7" height="7" fill="#ff0000" />
<rect x="339" y="173" width="9" height="9" fill="#000" />
<rect x="340" y="174" width="7" height="7" fill="#ff0000" />
<rect x="366" y="162" width="9" height="9" fill="#000" />
<rect x="367" y="163" width="7" height="7" fill="#ff0000" />
<rect x="394" y="169" width="9" height="9" fill="#000" />
<rect x="395" y="170" width="7" height="7" fill="#ff0000" />
<rect x="421" y="217" width="9" height="9" fill="#000" />
<rect x="422" y="218" width="7" height="7" fill="#ff0000" />
<rect x="448" y="156" width="9" height="9" fill="#000" />
<rect x="449" y="157" width="7" height="7" fill="#ff0000" />
<rect x="476" y="173" width="9" height="9" fill="#000" />
<rect x="477" y="174" width="7" height="7" fill="#ff0000" />
<rect x="503" y="163" width="9" height="9" fill="#000" />
<rect x="504" y="164" width="7" height="7" fill="#ff0000" />
<rect x="530" y="170" width="9" height="9" fill="#000" />
<rect x="531" y="171" width="7" height="7" fill="#ff0000" />
<rect x="558" y="219" width="9" height="9" fill="#000" />
<rect x="559" y="220" width="7" height="7" fill="#ff0000" />
<rect x="585" y="158" width="9" height="9" fill="#000" />
<rect x="586" y="159" width="7" height="7" fill="#ff0000" />
<rect x="612" y="173" width="9" height="9" fill="#000" />
<rect x="613" y="174" width="7" height="7" fill="#ff0000" />
<rect x="640" y="162" width="9" height="9" fill="#000" />
<rect x="641" y="163" width="7" height="7" fill="#ff0000" />
<rect x="667" y="169" width="9" height="9" fill="#000" />
<rect x="668" y="170" width="7" height="7" fill="#ff0000" />
<rect x="694" y="218" width="9" height="9" fill="#000" />
<rect x="695" y="219" width="7" height="7" fill="#ff0000" />
<rect x="722" y="157" width="9" height="9" fill="#000" />
<rect x="723" y="158" width="7" height="7" fill="#ff0000" />
<rect x="749" y="173" width="9" height="9" fill="#000" />
<rect x="750" y="174" width="7" height="7" fill="#ff0000" />
<rect x="776" y="162" width="9" height="9" fill="#000" />
<rect x="777" y="163" width="7" height="7" fill="#ff0000" />
<rect x="804" y="169" width="9" height="9" fill="#000" />
<rect x="805" y="170" width="7" height="7" fill="#ff0000" />
<rect x="831" y="217" width="9" height="9" fill="#000" />
<rect x="832" y="218" width="7" height="7" fill="#ff0000" />
<rect x="859" y="156" width="9" height="9" fill="#000" />
<rect x="860" y="157" width="7" height="7" fill="#ff0000" />
<rect x="886" y="172" width="9" height="9" fill="#000" />
<rect x="887" y="173" width="7" height="7" fill="#ff0000" />
<rect x="913" y="161" width="9" height="9" fill="#000" />
<rect x="914" y="162" width="7" height="7" fill="#ff0000" />
</g>
<rect x="96" y="155" width="877" height="1" fill="#000" />
<rect x="972" y="155" width="1" height="74" fill="#000" />
<rect x="96" y="155" width="2" height="74" fill="#000" />
<rect x="96" y="227" width="877" height="2" fill="#000" />
<rect x="97" y="229" width="1" height="4" fill="#7a7a7a" />
<rect x="124" y="229" width="1" height="4" fill="#7a7a7a" />
<rect x="152" y="229" width="1" height="4" fill="#7a7a7a" />
<rect x="179" y="229" width="1" height="4" fill="#7a7a7a" />
<rect x="206" y="229" width="1" height="4" fill="#7a7a7a" />
<rect x="234" y="229" width="1" height="4" fill="#7a7a7a" />
<rect x="261" y="229" width="1" height="4" fill="#7a7a7a" />
<rect x="288" y="229" width="1" height="4" fill="#7a7a7a" />
<rect x="316" y="229" width="1" height="4" fill="#7a7a7a" />
<rect x="343" y="229" width="1" height="4" fill="#7a7a7a" />
<rect x="370" y="229" width="1" height="4" fill="#7a7a7a" />
<rect x="398" y="229" width="1" height="4" fill="#7a7a7a" />
<rect x="425" y="229" width="1" height="4" fill="#7a7a7a" />
<rect x="452" y="229" width="1" height="4" fill="#7a7a7a" />
<rect x="480" y="229" width="1" height="4" fill="#7a7a7a" />
<rect x="507" y="229" width="1" height="4" fill="#7a7a7a" />
<rect x="534" y="229" width="1" height="4" fill="#7a7a7a" />
<rect x="562" y="229" width="1" height="4" fill="#7a7a7a" />
<rect x="589" y="229" width="1" height="4" fill="#7a7a7a" />
<rect x="616" y="229" width="1" height="4" fill="#7a7a7a" />
<rect x="644" y="229" width="1" height="4" fill="#7a7a7a" />
<rect x="671" y="229" width="1" height="4" fill="#7a7a7a" />
<rect x="698" y="229" width="1" height="4" fill="#7a7a7a" />
<rect x="726" y="229" width="1" height="4" fill="#7a7a7a" />
<rect x="753" y="229" width="1" height="4" fill="#7a7a7a" />
<rect x="780" y="229" width="1" height="4" fill="#7a7a7a" />
<rect x="808" y="229" width="1" height="4" fill="#7a7a7a" />
<rect x="835" y="229" width="1" height="4" fill="#7a7a7a" />
<rect x="863" y="229" width="1" height="4" fill="#7a7a7a" />
<rect x="890" y="229" width="1" height="4" fill="#7a7a7a" />
<rect x="917" y="229" width="1" height="4" fill="#7a7a7a" />
<rect x="945" y="229" width="1" height="4" fill="#7a7a7a" />
<rect x="972" y="229" width="1" height="4" fill="#7a7a7a" />
<rect x="104" y="229" width="1" height="2" fill="#7a7a7a" />
<rect x="111" y="229" width="1" height="2" fill="#7a7a7a" />
<rect x="118" y="229" width="1" height="2" fill="#7a7a7a" />
<rect x="131" y="229" width="1" height="2" fill="#7a7a7a" />
<rect x="138" y="229" width="1" height="2" fill="#7a7a7a" />
<rect x="145" y="229" width="1" height="2" fill="#7a7a7a" />
<rect x="159" y="229" width="1" height="2" fill="#7a7a7a" />
<rect x="165" y="229" width="1" height="2" fill="#7a7a7a" />
<rect x="172" y="229" width="1" height="2" fill="#7a7a7a" />
<rect x="186" y="229" width="1" height="2" fill="#7a7a7a" />
<rect x="193" y="229" width="1" height="2" fill="#7a7a7a" />
<rect x="200" y="229" width="1" height="2" fill="#7a7a7a" />
<rect x="213" y="229" width="1" height="2" fill="#7a7a7a" />
<rect x="220" y="229" width="1" height="2" fill="#7a7a7a" />
<rect x="227" y="229" width="1" height="2" fill="#7a7a7a" />
<rect x="241" y="229" width="1" height="2" fill="#7a7a7a" />
<rect x="247" y="229" width="1" height="2" fill="#7a7a7a" />
<rect x="254" y="229" width="1" height="2" fill="#7a7a7a" />
<rect x="268" y="229" width="1" height="2" fill="#7a7a7a" />
<rect x="275" y="229" width="1" height="2" fill="#7a7a7a" />
<rect x="282" y="229" width="1" height="2" fill="#7a7a7a" />
<rect x="295" y="229" width="1" height="2" fill="#7a7a7a" />
<rect x="302" y="229" width="1" height="2" fill="#7a7a7a" />
<rect x="309" y="229" width="1" height="2" fill="#7a7a7a" />
<rect x="323" y="229" width="1" height="2" fill="#7a7a7a" />
<rect x="329" y="229" width="1" height="2" fill="#7a7a7a" />
<rect x="336" y="229" width="1" height="2" fill="#7a7a7a" />
<rect x="350" y="229" width="1" height="2" fill="#7a7a7a" />
<rect x="357" y="229" width="1" height="2" fill="#7a7a7a" />
<rect x="364" y="229" width="1" height="2" fill="#7a7a7a" />
<rect x="377" y="229" width="1" height="2" fill="#7a7a7a" />
<rect x="384" y="229" width="1" height="2" fill="#7a7a7a" />
<rect x="391" y="229" width="1" height="2" fill="#7a7a7a" />
<rect x="405" y="229" width="1" height="2" fill="#7a7a7a" />
<rect x="411" y="229" width="1" height="2" fill="#7a7a7a" />
<rect x="418" y="229" width="1" height="2" fill="#7a7a7a" />
<rect x="432" y="229" width="1" height="2" fill="#7a7a7a" />
<rect x="439" y="229" width="1" height="2" fill="#7a7a7a" />
<rect x="446" y="229" width="1" height="2" fill="#7a7a7a" />
<rect x="459" y="229" width="1" height="2" fill="#7a7a7a" />
<rect x="466" y="229" width="1" height="2" fill="#7a7a7a" />
<rect x="473" y="229" width="1" height="2" fill="#7a7a7a" />
<rect x="487" y="229" width="1" height="2" fill="#7a7a7a" />
<rect x="493" y="229" width="1" height="2" fill="#7a7a7a" />
<rect x="500" y="229" width="1" height="2" fill="#7a7a7a" />
<rect x="514" y="229" width="1" height="2" fill="#7a7a7a" />
<rect x="521" y="229" width="1" height="2" fill="#7a7a7a" />
<rect x="528" y="229" width="1" height="2" fill="#7a7a7a" />
<rect x="541" y="229" width="1" height="2" fill="#7a7a7a" />
<rect x="548" y="229" width="1" height="2" fill="#7a7a7a" />
<rect x="555" y="229" width="1" height="2" fill="#7a7a7a" />
<rect x="569" y="229" width="1" height="2" fill="#7a7a7a" />
<rect x="575" y="229" width="1" height="2" fill="#7a7a7a" />
<rect x="582" y="229" width="1" height="2" fill="#7a7a7a" />
<rect x="596" y="229" width="1" height="2" fill="#7a7a7a" />
<rect x="603" y="229" width="1" height="2" fill="#7a7a7a" />
<rect x="610" y="229" width="1" height="2" fill="#7a7a7a" />
<rect x="623" y="229" width="1" height="2" fill="#7a7a7a" />
<rect x="630" y="229" width="1" height="2" fill="#7a7a7a" />
<rect x="637" y="229" width="1" height="2" fill="#7a7a7a" />
<rect x="651" y="229" width="1" height="2" fill="#7a7a7a" />
<rect x="657" y="229" width="1" height="2" fill="#7a7a7a" />
<rect x="664" y="229" width="1" height="2" fill="#7a7a7a" />
<rect x="678" y="229" width="1" height="2" fill="#7a7a7a" />
<rect x="685" y="229" width="1" height="2" fill="#7a7a7a" />
<rect x="692" y="229" width="1" height="2" fill="#7a7a7a" />
<rect x="705" y="229" width="1" height="2" fill="#7a7a7a" />
<rect x="712" y="229" width="1" height="2" fill="#7a7a7a" />
<rect x="719" y="229" width="1" height="2" fill="#7a7a7a" />
<rect x="733" y="229" width="1" height="2" fill="#7a7a7a" />
<rect x="739" y="229" width="1" height="2" fill="#7a7a7a" />
<rect x="746" y="229" width="1" height="2" fill="#7a7a7a" />
<rect x="760" y="229" width="1" height="2" fill="#7a7a7a" />
<rect x="767" y="229" width="1" height="2" fill="#7a7a7a" />
<rect x="774" y="229" width="1" height="2" fill="#7a7a7a" />
<rect x="787" y="229" width="1" height="2" fill="#7a7a7a" />
<rect x="794" y="229" width="1" height="2" fill="#7a7a7a" />
<rect x="801" y="229" width="1" height="2" fill="#7a7a7a" />
<rect x="815" y="229" width="1" height="2" fill="#7a7a7a" />
<rect x="822" y="229" width="1" height="2" fill="#7a7a7a" />
<rect x="828" y="229" width="1" height="2" fill="#7a7a7a" />
<rect x="842" y="229" width="1" height="2" fill="#7a7a7a" />
<rect x="849" y="229" width="1" height="2" fill="#7a7a7a" />
<rect x="856" y="229" width="1" height="2" fill="#7a7a7a" />
<rect x="869" y="229" width="1" height="2" fill="#7a7a7a" />
<rect x="876" y="229" width="1" height="2" fill="#7a7a7a" />
<rect x="883" y="229" width="1" height="2" fill="#7a7a7a" />
<rect x="897" y="229" width="1" height="2" fill="#7a7a7a" />
<rect x="904" y="229" width="1" height="2" fill="#7a7a7a" />
<rect x="910" y="229" width="1" height="2" fill="#7a7a7a" />
<rect x="924" y="229" width="1" height="2" fill="#7a7a7a" />
<rect x="931" y="229" width="1" height="2" fill="#7a7a7a" />
<rect x="938" y="229" width="1" height="2" fill="#7a7a7a" />
<rect x="951" y="229" width="1" height="2" fill="#7a7a7a" />
<rect x="958" y="229" width="1" height="2" fill="#7a7a7a" />
<rect x="965" y="229" width="1" height="2" fill="#7a7a7a" />
<rect x="93" y="161" width="3" height="1" fill="#7a7a7a" />
<rect x="93" y="182" width="3" height="1" fill="#7a7a7a" />
<rect x="93" y="202" width="3" height="1" fill="#7a7a7a" />
<rect x="93" y="223" width="3" height="1" fill="#7a7a7a" />
<rect x="95" y="218" width="1" height="1" fill="#7a7a7a" />
<rect x="95" y="213" width="1" height="1" fill="#7a7a7a" />
<rect x="95" y="207" width="1" height="1" fill="#7a7a7a" />
<rect x="95" y="197" width="1" height="1" fill="#7a7a7a" />
<rect x="95" y="192" width="1" height="1" fill="#7a7a7a" />
<rect x="95" y="187" width="1" height="1" fill="#7a7a7a" />
<rect x="95" y="176" width="1" height="1" fill="#7a7a7a" />
<rect x="95" y="171" width="1" height="1" fill="#7a7a7a" />
<rect x="95" y="166" width="1" height="1" fill="#7a7a7a" />
<rect x="95" y="156" width="1" height="1" fill="#7a7a7a" />
<text x="97.5" y="246" font-size="11" fill="#000" text-anchor="middle" >0</text>
<text x="124.5" y="246" font-size="11" fill="#000" text-anchor="middle" >1</text>
<text x="152.5" y="246" font-size="11" fill="#000" text-anchor="middle" >2</text>
<text x="179.5" y="246" font-size="11" fill="#000" text-anchor="middle" >3</text>
<text x="206.5" y="246" font-size="11" fill="#000" text-anchor="middle" >4</text>
<text x="234.5" y="246" font-size="11" fill="#000" text-anchor="middle" >5</text>
<text x="261.5" y="246" font-size="11" fill="#000" text-anchor="middle" >6</text>
<text x="288.5" y="246" font-size="11" fill="#000" text-anchor="middle" >7</text>
<text x="316.5" y="246" font-size="11" fill="#000" text-anchor="middle" >8</text>
<text x="343.5" y="246" font-size="11" fill="#000" text-anchor="middle" >9</text>
<text x="370.5" y="246" font-size="11" fill="#000" text-anchor="middle" >10</text>
<text x="398.5" y="246" font-size="11" fill="#000" text-anchor="middle" >11</text>
<text x="425.5" y="246" font-size="11" fill="#000" text-anchor="middle" >12</text>
<text x="452.5" y="246" font-size="11" fill="#000" text-anchor="middle" >13</text>
<text x="480.5" y="246" font-size="11" fill="#000" text-anchor="middle" >14</text>
<text x="507.5" y="246" font-size="11" fill="#000" text-anchor="middle" >15</text>
<text x="534.5" y="246" font-size="11" fill="#000" text-anchor="middle" >16</text>
<text x="562.5" y="246" font-size="11" fill="#000" text-anchor="middle" >17</text>
<text x="589.5" y="246" font-size="11" fill="#000" text-anchor="middle" >18</text>
<text x="616.5" y="246" font-size="11" fill="#000" text-anchor="middle" >19</text>
<text x="644.5" y="246" font-size="11" fill="#000" text-anchor="middle" >20</text>
<text x="671.5" y="246" font-size="11" fill="#000" text-anchor="middle" >21</text>
<text x="698.5" y="246" font-size="11" fill="#000" text-anchor="middle" >22</text>
<text x="726.5" y="246" font-size="11" fill="#000" text-anchor="middle" >23</text>
<text x="753.5" y="246" font-size="11" fill="#000" text-anchor="middle" >24</text>
<text x="780.5" y="246" font-size="11" fill="#000" text-anchor="middle" >25</text>
<text x="808.5" y="246" font-size="11" fill="#000" text-anchor="middle" >26</text>
<text x="835.5" y="246" font-size="11" fill="#000" text-anchor="middle" >27</text>
<text x="863.5" y="246" font-size="11" fill="#000" text-anchor="middle" >28</text>
<text x="890.5" y="246" font-size="11" fill="#000" text-anchor="middle" >29</text>
<text x="917.5" y="246" font-size="11" fill="#000" text-anchor="middle" >30</text>
<text x="945.5" y="246" font-size="11" fill="#000" text-anchor="middle" >31</text>
<text x="972.5" y="246" font-size="11" fill="#000" text-anchor="middle" >32</text>
<text x="90" y="165" font-size="11" fill="#000" text-anchor="end" >11</text>
<text x="90" y="186" font-size="11" fill="#000" text-anchor="end" >10</text>
<text x="90" y="206" font-size="11" fill="#000" text-anchor="end" >9</text>
<text x="90" y="227" font-size="11" fill="#000" text-anchor="end" >8</text>
<text x="512.2" y="145" font-size="11" fill="#1818ff" text-anchor="middle" >Torque (MsVw) Data</text>
<text x="533.4" y="260" font-size="11" fill="#000" text-anchor="middle" >Datapoint</text>
<text x="0" y="0" font-size="11" fill="#000" text-anchor="middle" textLength="61" lengthAdjust="spacingAndGlyphs" transform="translate(63,192.5) rotate(-90)">Torque [Nm]</text>
<line x1="140.5" y1="302" x2="140.5" y2="451" stroke="#808080" stroke-dasharray="3 3"/>
<line x1="192.5" y1="302" x2="192.5" y2="451" stroke="#808080" stroke-dasharray="3 3"/>
<line x1="244.5" y1="302" x2="244.5" y2="451" stroke="#808080" stroke-dasharray="3 3"/>
<line x1="296.5" y1="302" x2="296.5" y2="451" stroke="#808080" stroke-dasharray="3 3"/>
<line x1="348.5" y1="302" x2="348.5" y2="451" stroke="#808080" stroke-dasharray="3 3"/>
<line x1="400.5" y1="302" x2="400.5" y2="451" stroke="#808080" stroke-dasharray="3 3"/>
<line x1="452.5" y1="302" x2="452.5" y2="451" stroke="#808080" stroke-dasharray="3 3"/>
<line x1="504.5" y1="302" x2="504.5" y2="451" stroke="#808080" stroke-dasharray="3 3"/>
<line x1="556.5" y1="302" x2="556.5" y2="451" stroke="#808080" stroke-dasharray="3 3"/>
<line x1="608.5" y1="302" x2="608.5" y2="451" stroke="#808080" stroke-dasharray="3 3"/>
<line x1="660.5" y1="302" x2="660.5" y2="451" stroke="#808080" stroke-dasharray="3 3"/>
<line x1="712.5" y1="302" x2="712.5" y2="451" stroke="#808080" stroke-dasharray="3 3"/>
<line x1="764.5" y1="302" x2="764.5" y2="451" stroke="#808080" stroke-dasharray="3 3"/>
<line x1="816.5" y1="302" x2="816.5" y2="451" stroke="#808080" stroke-dasharray="3 3"/>
<line x1="868.5" y1="302" x2="868.5" y2="451" stroke="#808080" stroke-dasharray="3 3"/>
<line x1="920.5" y1="302" x2="920.5" y2="451" stroke="#808080" stroke-dasharray="3 3"/>
<line x1="89" y1="437.5" x2="972" y2="437.5" stroke="#808080" stroke-dasharray="3 3"/>
<line x1="89" y1="422.5" x2="972" y2="422.5" stroke="#808080" stroke-dasharray="3 3"/>
<line x1="89" y1="407.5" x2="972" y2="407.5" stroke="#808080" stroke-dasharray="3 3"/>
<line x1="89" y1="392.5" x2="972" y2="392.5" stroke="#808080" stroke-dasharray="3 3"/>
<line x1="89" y1="377.5" x2="972" y2="377.5" stroke="#808080" stroke-dasharray="3 3"/>
<line x1="89" y1="362.5" x2="972" y2="362.5" stroke="#808080" stroke-dasharray="3 3"/>
<line x1="89" y1="347.5" x2="972" y2="347.5" stroke="#808080" stroke-dasharray="3 3"/>
<line x1="89" y1="333.5" x2="972" y2="333.5" stroke="#808080" stroke-dasharray="3 3"/>
<line x1="89" y1="318.5" x2="972" y2="318.5" stroke="#808080" stroke-dasharray="3 3"/>
<line x1="89" y1="303.5" x2="972" y2="303.5" stroke="#808080" stroke-dasharray="3 3"/>
<rect x="87" y="301" width="23" height="151" fill="#000" />
<rect x="88" y="302" width="21" height="149" fill="#ff0000" />
<rect x="379" y="438" width="43" height="14" fill="#000" />
<rect x="380" y="439" width="41" height="12" fill="#ff0000" />
<rect x="691" y="435" width="43" height="17" fill="#000" />
<rect x="692" y="436" width="41" height="15" fill="#ff0000" />
<rect x="87" y="301" width="886" height="1" fill="#000" />
<rect x="972" y="301" width="1" height="152" fill="#000" />
<rect x="87" y="301" width="2" height="152" fill="#000" />
<rect x="87" y="451" width="886" height="2" fill="#000" />
<rect x="88" y="453" width="1" height="4" fill="#7a7a7a" />
<rect x="140" y="453" width="1" height="4" fill="#7a7a7a" />
<rect x="192" y="453" width="1" height="4" fill="#7a7a7a" />
<rect x="244" y="453" width="1" height="4" fill="#7a7a7a" />
<rect x="296" y="453" width="1" height="4" fill="#7a7a7a" />
<rect x="348" y="453" width="1" height="4" fill="#7a7a7a" />
<rect x="400" y="453" width="1" height="4" fill="#7a7a7a" />
<rect x="452" y="453" width="1" height="4" fill="#7a7a7a" />
<rect x="504" y="453" width="1" height="4" fill="#7a7a7a" />
<rect x="556" y="453" width="1" height="4" fill="#7a7a7a" />
<rect x="608" y="453" width="1" height="4" fill="#7a7a7a" />
<rect x="660" y="453" width="1" height="4" fill="#7a7a7a" />
<rect x="712" y="453" width="1" height="4" fill="#7a7a7a" />
<rect x="764" y="453" width="1" height="4" fill="#7a7a7a" />
<rect x="816" y="453" width="1" height="4" fill="#7a7a7a" />
<rect x="868" y="453" width="1" height="4" fill="#7a7a7a" />
<rect x="920" y="453" width="1" height="4" fill="#7a7a7a" />
<rect x="972" y="453" width="1" height="4" fill="#7a7a7a" />
<rect x="101" y="453" width="1" height="2" fill="#7a7a7a" />
<rect x="114" y="453" width="1" height="2" fill="#7a7a7a" />
<rect x="127" y="453" width="1" height="2" fill="#7a7a7a" />
<rect x="153" y="453" width="1" height="2" fill="#7a7a7a" />
<rect x="166" y="453" width="1" height="2" fill="#7a7a7a" />
<rect x="179" y="453" width="1" height="2" fill="#7a7a7a" />
<rect x="205" y="453" width="1" height="2" fill="#7a7a7a" />
<rect x="218" y="453" width="1" height="2" fill="#7a7a7a" />
<rect x="231" y="453" width="1" height="2" fill="#7a7a7a" />
<rect x="257" y="453" width="1" height="2" fill="#7a7a7a" />
<rect x="270" y="453" width="1" height="2" fill="#7a7a7a" />
<rect x="283" y="453" width="1" height="2" fill="#7a7a7a" />
<rect x="309" y="453" width="1" height="2" fill="#7a7a7a" />
<rect x="322" y="453" width="1" height="2" fill="#7a7a7a" />
<rect x="335" y="453" width="1" height="2" fill="#7a7a7a" />
<rect x="361" y="453" width="1" height="2" fill="#7a7a7a" />
<rect x="374" y="453" width="1" height="2" fill="#7a7a7a" />
<rect x="387" y="453" width="1" height="2" fill="#7a7a7a" />
<rect x="413" y="453" width="1" height="2" fill="#7a7a7a" />
<rect x="426" y="453" width="1" height="2" fill="#7a7a7a" />
<rect x="439" y="453" width="1" height="2" fill="#7a7a7a" />
<rect x="465" y="453" width="1" height="2" fill="#7a7a7a" />
<rect x="478" y="453" width="1" height="2" fill="#7a7a7a" />
<rect x="491" y="453" width="1" height="2" fill="#7a7a7a" />
<rect x="517" y="453" width="1" height="2" fill="#7a7a7a" />
<rect x="530" y="453" width="1" height="2" fill="#7a7a7a" />
<rect x="543" y="453" width="1" height="2" fill="#7a7a7a" />
<rect x="569" y="453" width="1" height="2" fill="#7a7a7a" />
<rect x="582" y="453" width="1" height="2" fill="#7a7a7a" />
<rect x="595" y="453" width="1" height="2" fill="#7a7a7a" />
<rect x="621" y="453" width="1" height="2" fill="#7a7a7a" />
<rect x="634" y="453" width="1" height="2" fill="#7a7a7a" />
<rect x="647" y="453" width="1" height="2" fill="#7a7a7a" />
<rect x="673" y="453" width="1" height="2" fill="#7a7a7a" />
<rect x="686" y="453" width="1" height="2" fill="#7a7a7a" />
<rect x="699" y="453" width="1" height="2" fill="#7a7a7a" />
<rect x="725" y="453" width="1" height="2" fill="#7a7a7a" />
<rect x="738" y="453" width="1" height="2" fill="#7a7a7a" />
<rect x="751" y="453" width="1" height="2" fill="#7a7a7a" />
<rect x="777" y="453" width="1" height="2" fill="#7a7a7a" />
<rect x="790" y="453" width="1" height="2" fill="#7a7a7a" />
<rect x="803" y="453" width="1" height="2" fill="#7a7a7a" />
<rect x="829" y="453" width="1" height="2" fill="#7a7a7a" />
<rect x="842" y="453" width="1" height="2" fill="#7a7a7a" />
<rect x="855" y="453" width="1" height="2" fill="#7a7a7a" />
<rect x="881" y="453" width="1" height="2" fill="#7a7a7a" />
<rect x="894" y="453" width="1" height="2" fill="#7a7a7a" />
<rect x="907" y="453" width="1" height="2" fill="#7a7a7a" />
<rect x="933" y="453" width="1" height="2" fill="#7a7a7a" />
<rect x="946" y="453" width="1" height="2" fill="#7a7a7a" />
<rect x="959" y="453" width="1" height="2" fill="#7a7a7a" />
<rect x="84" y="452" width="3" height="1" fill="#7a7a7a" />
<rect x="84" y="437" width="3" height="1" fill="#7a7a7a" />
<rect x="84" y="422" width="3" height="1" fill="#7a7a7a" />
<rect x="84" y="407" width="3" height="1" fill="#7a7a7a" />
<rect x="84" y="392" width="3" height="1" fill="#7a7a7a" />
<rect x="84" y="377" width="3" height="1" fill="#7a7a7a" />
<rect x="84" y="362" width="3" height="1" fill="#7a7a7a" />
<rect x="84" y="347" width="3" height="1" fill="#7a7a7a" />
<rect x="84" y="333" width="3" height="1" fill="#7a7a7a" />
<rect x="84" y="318" width="3" height="1" fill="#7a7a7a" />
<rect x="84" y="303" width="3" height="1" fill="#7a7a7a" />
<rect x="86" y="448" width="1" height="1" fill="#7a7a7a" />
<rect x="86" y="444" width="1" height="1" fill="#7a7a7a" />
<rect x="86" y="441" width="1" height="1" fill="#7a7a7a" />
<rect x="86" y="433" width="1" height="1" fill="#7a7a7a" />
<rect x="86" y="430" width="1" height="1" fill="#7a7a7a" />
<rect x="86" y="426" width="1" height="1" fill="#7a7a7a" />
<rect x="86" y="418" width="1" height="1" fill="#7a7a7a" />
<rect x="86" y="414" width="1" height="1" fill="#7a7a7a" />
<rect x="86" y="411" width="1" height="1" fill="#7a7a7a" />
<rect x="86" y="403" width="1" height="1" fill="#7a7a7a" />
<rect x="86" y="400" width="1" height="1" fill="#7a7a7a" />
<rect x="86" y="396" width="1" height="1" fill="#7a7a7a" />
<rect x="86" y="388" width="1" height="1" fill="#7a7a7a" />
<rect x="86" y="384" width="1" height="1" fill="#7a7a7a" />
<rect x="86" y="381" width="1" height="1" fill="#7a7a7a" />
<rect x="86" y="373" width="1" height="1" fill="#7a7a7a" />
<rect x="86" y="370" width="1" height="1" fill="#7a7a7a" />
<rect x="86" y="366" width="1" height="1" fill="#7a7a7a" />
<rect x="86" y="358" width="1" height="1" fill="#7a7a7a" />
<rect x="86" y="354" width="1" height="1" fill="#7a7a7a" />
<rect x="86" y="351" width="1" height="1" fill="#7a7a7a" />
<rect x="86" y="344" width="1" height="1" fill="#7a7a7a" />
<rect x="86" y="340" width="1" height="1" fill="#7a7a7a" />
<rect x="86" y="336" width="1" height="1" fill="#7a7a7a" />
<rect x="86" y="329" width="1" height="1" fill="#7a7a7a" />
<rect x="86" y="326" width="1" height="1" fill="#7a7a7a" />
<rect x="86" y="322" width="1" height="1" fill="#7a7a7a" />
<rect x="86" y="314" width="1" height="1" fill="#7a7a7a" />
<rect x="86" y="310" width="1" height="1" fill="#7a7a7a" />
<rect x="86" y="307" width="1" height="1" fill="#7a7a7a" />
<text x="88.5" y="470" font-size="11" fill="#000" text-anchor="middle" >0</text>
<text x="140.5" y="470" font-size="11" fill="#000" text-anchor="middle" >1</text>
<text x="192.5" y="470" font-size="11" fill="#000" text-anchor="middle" >2</text>
<text x="244.5" y="470" font-size="11" fill="#000" text-anchor="middle" >3</text>
<text x="296.5" y="470" font-size="11" fill="#000" text-anchor="middle" >4</text>
<text x="348.5" y="470" font-size="11" fill="#000" text-anchor="middle" >5</text>
<text x="400.5" y="470" font-size="11" fill="#000" text-anchor="middle" >6</text>
<text x="452.5" y="470" font-size="11" fill="#000" text-anchor="middle" >7</text>
<text x="504.5" y="470" font-size="11" fill="#000" text-anchor="middle" >8</text>
<text x="556.5" y="470" font-size="11" fill="#000" text-anchor="middle" >9</text>
<text x="608.5" y="470" font-size="11" fill="#000" text-anchor="middle" >10</text>
<text x="660.5" y="470" font-size="11" fill="#000" text-anchor="middle" >11</text>
<text x="712.5" y="470" font-size="11" fill="#000" text-anchor="middle" >12</text>
<text x="764.5" y="470" font-size="11" fill="#000" text-anchor="middle" >13</text>
<text x="816.5" y="470" font-size="11" fill="#000" text-anchor="middle" >14</text>
<text x="868.5" y="470" font-size="11" fill="#000" text-anchor="middle" >15</text>
<text x="920.5" y="470" font-size="11" fill="#000" text-anchor="middle" >16</text>
<text x="972.5" y="470" font-size="11" fill="#000" text-anchor="middle" >17</text>
<text x="81" y="456" font-size="11" fill="#000" text-anchor="end" >0</text>
<text x="81" y="441" font-size="11" fill="#000" text-anchor="end" >1</text>
<text x="81" y="426" font-size="11" fill="#000" text-anchor="end" >2</text>
<text x="81" y="411" font-size="11" fill="#000" text-anchor="end" >3</text>
<text x="81" y="396" font-size="11" fill="#000" text-anchor="end" >4</text>
<text x="81" y="381" font-size="11" fill="#000" text-anchor="end" >5</text>
<text x="81" y="366" font-size="11" fill="#000" text-anchor="end" >6</text>
<text x="81" y="351" font-size="11" fill="#000" text-anchor="end" >7</text>
<text x="81" y="337" font-size="11" fill="#000" text-anchor="end" >8</text>
<text x="81" y="322" font-size="11" fill="#000" text-anchor="end" >9</text>
<text x="81" y="307" font-size="11" fill="#000" text-anchor="end" >10</text>
<text x="512" y="291" font-size="11" fill="#1818ff" text-anchor="middle" >Torque Magnitudes</text>
<text x="530.3" y="484" font-size="11" fill="#000" text-anchor="middle" >Harmonic order</text>
<text x="0" y="0" font-size="11" fill="#000" text-anchor="middle" textLength="122" lengthAdjust="spacingAndGlyphs" transform="translate(63,377) rotate(-90)">Harmonic amplitude [Nm]</text>
<line x1="153.5" y1="529" x2="153.5" y2="653" stroke="#808080" stroke-dasharray="3 3"/>
<line x1="207.5" y1="529" x2="207.5" y2="653" stroke="#808080" stroke-dasharray="3 3"/>
<line x1="262.5" y1="529" x2="262.5" y2="653" stroke="#808080" stroke-dasharray="3 3"/>
<line x1="316.5" y1="529" x2="316.5" y2="653" stroke="#808080" stroke-dasharray="3 3"/>
<line x1="371.5" y1="529" x2="371.5" y2="653" stroke="#808080" stroke-dasharray="3 3"/>
<line x1="426.5" y1="529" x2="426.5" y2="653" stroke="#808080" stroke-dasharray="3 3"/>
<line x1="480.5" y1="529" x2="480.5" y2="653" stroke="#808080" stroke-dasharray="3 3"/>
<line x1="535.5" y1="529" x2="535.5" y2="653" stroke="#808080" stroke-dasharray="3 3"/>
<line x1="590.5" y1="529" x2="590.5" y2="653" stroke="#808080" stroke-dasharray="3 3"/>
<line x1="644.5" y1="529" x2="644.5" y2="653" stroke="#808080" stroke-dasharray="3 3"/>
<line x1="699.5" y1="529" x2="699.5" y2="653" stroke="#808080" stroke-dasharray="3 3"/>
<line x1="754.5" y1="529" x2="754.5" y2="653" stroke="#808080" stroke-dasharray="3 3"/>
<line x1="808.5" y1="529" x2="808.5" y2="653" stroke="#808080" stroke-dasharray="3 3"/>
<line x1="863.5" y1="529" x2="863.5" y2="653" stroke="#808080" stroke-dasharray="3 3"/>
<line x1="917.5" y1="529" x2="917.5" y2="653" stroke="#808080" stroke-dasharray="3 3"/>
<line x1="99" y1="533.5" x2="972" y2="533.5" stroke="#808080" stroke-dasharray="3 3"/>
<line x1="99" y1="552.5" x2="972" y2="552.5" stroke="#808080" stroke-dasharray="3 3"/>
<line x1="99" y1="570.5" x2="972" y2="570.5" stroke="#808080" stroke-dasharray="3 3"/>
<line x1="99" y1="588.5" x2="972" y2="588.5" stroke="#808080" stroke-dasharray="3 3"/>
<line x1="99" y1="607.5" x2="972" y2="607.5" stroke="#808080" stroke-dasharray="3 3"/>
<line x1="99" y1="625.5" x2="972" y2="625.5" stroke="#808080" stroke-dasharray="3 3"/>
<line x1="99" y1="643.5" x2="972" y2="643.5" stroke="#808080" stroke-dasharray="3 3"/>
<rect x="131" y="555" width="45" height="33" fill="#000" />
<rect x="132" y="556" width="43" height="31" fill="#ff0000" />
<rect x="185" y="588" width="45" height="66" fill="#000" />
<rect x="186" y="589" width="43" height="64" fill="#ff0000" />
<rect x="240" y="554" width="45" height="34" fill="#000" />
<rect x="241" y="555" width="43" height="32" fill="#ff0000" />
<rect x="294" y="588" width="45" height="66" fill="#000" />
<rect x="295" y="589" width="43" height="64" fill="#ff0000" />
<rect x="349" y="554" width="45" height="34" fill="#000" />
<rect x="350" y="555" width="43" height="32" fill="#ff0000" />
<rect x="404" y="540" width="45" height="48" fill="#000" />
<rect x="405" y="541" width="43" height="46" fill="#ff0000" />
<rect x="458" y="554" width="45" height="34" fill="#000" />
<rect x="459" y="555" width="43" height="32" fill="#ff0000" />
<rect x="513" y="528" width="45" height="60" fill="#000" />
<rect x="514" y="529" width="43" height="58" fill="#ff0000" />
<rect x="568" y="554" width="45" height="34" fill="#000" />
<rect x="569" y="555" width="43" height="32" fill="#ff0000" />
<rect x="622" y="563" width="45" height="25" fill="#000" />
<rect x="623" y="564" width="43" height="23" fill="#ff0000" />
<rect x="677" y="554" width="45" height="34" fill="#000" />
<rect x="678" y="555" width="43" height="32" fill="#ff0000" />
<rect x="732" y="588" width="45" height="1" fill="#000" />
<rect x="786" y="555" width="45" height="33" fill="#000" />
<rect x="787" y="556" width="43" height="31" fill="#ff0000" />
<rect x="841" y="588" width="45" height="66" fill="#000" />
<rect x="842" y="589" width="43" height="64" fill="#ff0000" />
<rect x="895" y="555" width="45" height="33" fill="#000" />
<rect x="896" y="556" width="43" height="31" fill="#ff0000" />
<rect x="97" y="528" width="876" height="1" fill="#000" />
<rect x="972" y="528" width="1" height="127" fill="#000" />
<rect x="97" y="528" width="2" height="127" fill="#000" />
<rect x="97" y="653" width="876" height="2" fill="#000" />
<rect x="98" y="655" width="1" height="4" fill="#7a7a7a" />
<rect x="153" y="655" width="1" height="4" fill="#7a7a7a" />
<rect x="207" y="655" width="1" height="4" fill="#7a7a7a" />
<rect x="262" y="655" width="1" height="4" fill="#7a7a7a" />
<rect x="316" y="655" width="1" height="4" fill="#7a7a7a" />
<rect x="371" y="655" width="1" height="4" fill="#7a7a7a" />
<rect x="426" y="655" width="1" height="4" fill="#7a7a7a" />
<rect x="480" y="655" width="1" height="4" fill="#7a7a7a" />
<rect x="535" y="655" width="1" height="4" fill="#7a7a7a" />
<rect x="590" y="655" width="1" height="4" fill="#7a7a7a" />
<rect x="644" y="655" width="1" height="4" fill="#7a7a7a" />
<rect x="699" y="655" width="1" height="4" fill="#7a7a7a" />
<rect x="754" y="655" width="1" height="4" fill="#7a7a7a" />
<rect x="808" y="655" width="1" height="4" fill="#7a7a7a" />
<rect x="863" y="655" width="1" height="4" fill="#7a7a7a" />
<rect x="917" y="655" width="1" height="4" fill="#7a7a7a" />
<rect x="972" y="655" width="1" height="4" fill="#7a7a7a" />
<rect x="112" y="655" width="1" height="2" fill="#7a7a7a" />
<rect x="125" y="655" width="1" height="2" fill="#7a7a7a" />
<rect x="139" y="655" width="1" height="2" fill="#7a7a7a" />
<rect x="166" y="655" width="1" height="2" fill="#7a7a7a" />
<rect x="180" y="655" width="1" height="2" fill="#7a7a7a" />
<rect x="194" y="655" width="1" height="2" fill="#7a7a7a" />
<rect x="221" y="655" width="1" height="2" fill="#7a7a7a" />
<rect x="235" y="655" width="1" height="2" fill="#7a7a7a" />
<rect x="248" y="655" width="1" height="2" fill="#7a7a7a" />
<rect x="276" y="655" width="1" height="2" fill="#7a7a7a" />
<rect x="289" y="655" width="1" height="2" fill="#7a7a7a" />
<rect x="303" y="655" width="1" height="2" fill="#7a7a7a" />
<rect x="330" y="655" width="1" height="2" fill="#7a7a7a" />
<rect x="344" y="655" width="1" height="2" fill="#7a7a7a" />
<rect x="357" y="655" width="1" height="2" fill="#7a7a7a" />
<rect x="385" y="655" width="1" height="2" fill="#7a7a7a" />
<rect x="398" y="655" width="1" height="2" fill="#7a7a7a" />
<rect x="412" y="655" width="1" height="2" fill="#7a7a7a" />
<rect x="439" y="655" width="1" height="2" fill="#7a7a7a" />
<rect x="453" y="655" width="1" height="2" fill="#7a7a7a" />
<rect x="467" y="655" width="1" height="2" fill="#7a7a7a" />
<rect x="494" y="655" width="1" height="2" fill="#7a7a7a" />
<rect x="508" y="655" width="1" height="2" fill="#7a7a7a" />
<rect x="521" y="655" width="1" height="2" fill="#7a7a7a" />
<rect x="549" y="655" width="1" height="2" fill="#7a7a7a" />
<rect x="562" y="655" width="1" height="2" fill="#7a7a7a" />
<rect x="576" y="655" width="1" height="2" fill="#7a7a7a" />
<rect x="603" y="655" width="1" height="2" fill="#7a7a7a" />
<rect x="617" y="655" width="1" height="2" fill="#7a7a7a" />
<rect x="631" y="655" width="1" height="2" fill="#7a7a7a" />
<rect x="658" y="655" width="1" height="2" fill="#7a7a7a" />
<rect x="672" y="655" width="1" height="2" fill="#7a7a7a" />
<rect x="685" y="655" width="1" height="2" fill="#7a7a7a" />
<rect x="713" y="655" width="1" height="2" fill="#7a7a7a" />
<rect x="726" y="655" width="1" height="2" fill="#7a7a7a" />
<rect x="740" y="655" width="1" height="2" fill="#7a7a7a" />
<rect x="767" y="655" width="1" height="2" fill="#7a7a7a" />
<rect x="781" y="655" width="1" height="2" fill="#7a7a7a" />
<rect x="794" y="655" width="1" height="2" fill="#7a7a7a" />
<rect x="822" y="655" width="1" height="2" fill="#7a7a7a" />
<rect x="835" y="655" width="1" height="2" fill="#7a7a7a" />
<rect x="849" y="655" width="1" height="2" fill="#7a7a7a" />
<rect x="876" y="655" width="1" height="2" fill="#7a7a7a" />
<rect x="890" y="655" width="1" height="2" fill="#7a7a7a" />
<rect x="904" y="655" width="1" height="2" fill="#7a7a7a" />
<rect x="931" y="655" width="1" height="2" fill="#7a7a7a" />
<rect x="945" y="655" width="1" height="2" fill="#7a7a7a" />
<rect x="958" y="655" width="1" height="2" fill="#7a7a7a" />
<rect x="94" y="533" width="3" height="1" fill="#7a7a7a" />
<rect x="94" y="552" width="3" height="1" fill="#7a7a7a" />
<rect x="94" y="570" width="3" height="1" fill="#7a7a7a" />
<rect x="94" y="588" width="3" height="1" fill="#7a7a7a" />
<rect x="94" y="607" width="3" height="1" fill="#7a7a7a" />
<rect x="94" y="625" width="3" height="1" fill="#7a7a7a" />
<rect x="94" y="643" width="3" height="1" fill="#7a7a7a" />
<rect x="96" y="652" width="1" height="1" fill="#7a7a7a" />
<rect x="96" y="647" width="1" height="1" fill="#7a7a7a" />
<rect x="96" y="638" width="1" height="1" fill="#7a7a7a" />
<rect x="96" y="633" width="1" height="1" fill="#7a7a7a" />
<rect x="96" y="629" width="1" height="1" fill="#7a7a7a" />
<rect x="96" y="620" width="1" height="1" fill="#7a7a7a" />
<rect x="96" y="615" width="1" height="1" fill="#7a7a7a" />
<rect x="96" y="611" width="1" height="1" fill="#7a7a7a" />
<rect x="96" y="602" width="1" height="1" fill="#7a7a7a" />
<rect x="96" y="597" width="1" height="1" fill="#7a7a7a" />
<rect x="96" y="593" width="1" height="1" fill="#7a7a7a" />
<rect x="96" y="583" width="1" height="1" fill="#7a7a7a" />
<rect x="96" y="579" width="1" height="1" fill="#7a7a7a" />
<rect x="96" y="574" width="1" height="1" fill="#7a7a7a" />
<rect x="96" y="565" width="1" height="1" fill="#7a7a7a" />
<rect x="96" y="561" width="1" height="1" fill="#7a7a7a" />
<rect x="96" y="556" width="1" height="1" fill="#7a7a7a" />
<rect x="96" y="547" width="1" height="1" fill="#7a7a7a" />
<rect x="96" y="543" width="1" height="1" fill="#7a7a7a" />
<rect x="96" y="538" width="1" height="1" fill="#7a7a7a" />
<rect x="96" y="529" width="1" height="1" fill="#7a7a7a" />
<text x="98.5" y="672" font-size="11" fill="#000" text-anchor="middle" >0</text>
<text x="153.5" y="672" font-size="11" fill="#000" text-anchor="middle" >1</text>
<text x="207.5" y="672" font-size="11" fill="#000" text-anchor="middle" >2</text>
<text x="262.5" y="672" font-size="11" fill="#000" text-anchor="middle" >3</text>
<text x="316.5" y="672" font-size="11" fill="#000" text-anchor="middle" >4</text>
<text x="371.5" y="672" font-size="11" fill="#000" text-anchor="middle" >5</text>
<text x="426.5" y="672" font-size="11" fill="#000" text-anchor="middle" >6</text>
<text x="480.5" y="672" font-size="11" fill="#000" text-anchor="middle" >7</text>
<text x="535.5" y="672" font-size="11" fill="#000" text-anchor="middle" >8</text>
<text x="590.5" y="672" font-size="11" fill="#000" text-anchor="middle" >9</text>
<text x="644.5" y="672" font-size="11" fill="#000" text-anchor="middle" >10</text>
<text x="699.5" y="672" font-size="11" fill="#000" text-anchor="middle" >11</text>
<text x="754.5" y="672" font-size="11" fill="#000" text-anchor="middle" >12</text>
<text x="808.5" y="672" font-size="11" fill="#000" text-anchor="middle" >13</text>
<text x="863.5" y="672" font-size="11" fill="#000" text-anchor="middle" >14</text>
<text x="917.5" y="672" font-size="11" fill="#000" text-anchor="middle" >15</text>
<text x="972.5" y="672" font-size="11" fill="#000" text-anchor="middle" >16</text>
<text x="91" y="537" font-size="11" fill="#000" text-anchor="end" >150</text>
<text x="91" y="556" font-size="11" fill="#000" text-anchor="end" >100</text>
<text x="91" y="574" font-size="11" fill="#000" text-anchor="end" >50</text>
<text x="91" y="592" font-size="11" fill="#000" text-anchor="end" >0</text>
<text x="91" y="611" font-size="11" fill="#000" text-anchor="end" >-50</text>
<text x="91" y="629" font-size="11" fill="#000" text-anchor="end" >-100</text>
<text x="91" y="647" font-size="11" fill="#000" text-anchor="end" >-150</text>
<text x="512.3" y="518" font-size="11" fill="#1818ff" text-anchor="middle" >Torque Angles</text>
<text x="535" y="686" font-size="11" fill="#000" text-anchor="middle" >Harmonic order</text>
<text x="0" y="0" font-size="11" fill="#000" text-anchor="middle" textLength="124" lengthAdjust="spacingAndGlyphs" transform="translate(63,592) rotate(-90)">Harmonic angle [degrees]</text>
</g>
<rect x="8" y="711" width="1008" height="1" fill="#a0a0a0" />
<rect x="9" y="713" width="1006" height="1" fill="#a0a0a0" />
<rect x="8" y="714" width="1008" height="21" fill="#ffffff" />
<rect x="10" y="715" width="1004" height="18" fill="#f0edeb" />
<rect x="1014" y="715" width="1" height="18" fill="#dcdcdc" />
<rect x="8" y="712" width="1008" height="1" fill="#ffffff" />
<rect x="496" y="716" width="1" height="17" fill="#cfcbc8" />
<rect x="497" y="716" width="1" height="17" fill="#ffffff" />
<rect x="546" y="716" width="1" height="17" fill="#cfcbc8" />
<rect x="547" y="716" width="1" height="17" fill="#ffffff" />
<rect x="746" y="716" width="1" height="17" fill="#cfcbc8" />
<rect x="747" y="716" width="1" height="17" fill="#ffffff" />
<rect x="776" y="716" width="1" height="17" fill="#cfcbc8" />
<rect x="777" y="716" width="1" height="17" fill="#ffffff" />
<rect x="876" y="716" width="1" height="17" fill="#cfcbc8" />
<rect x="877" y="716" width="1" height="17" fill="#ffffff" />
<text x="506" y="729" font-size="12" fill="#000" text-anchor="start" textLength="32" lengthAdjust="spacingAndGlyphs" >Length</text>
<text x="612" y="729" font-size="12" fill="#000" text-anchor="start" textLength="74" lengthAdjust="spacingAndGlyphs" >(-1.000,24.666)</text>
<text x="754.6" y="729" font-size="12" fill="#000" text-anchor="start" textLength="15.4" lengthAdjust="spacingAndGlyphs" >mm</text>
<text x="788" y="729" font-size="12" fill="#000" text-anchor="start" textLength="79" lengthAdjust="spacingAndGlyphs" >28 January 2015</text>
<text x="891" y="729" font-size="12" fill="#000" text-anchor="start" textLength="110" lengthAdjust="spacingAndGlyphs" >www.motor-design.com</text>
<rect x="1" y="741" width="1022" height="1" fill="#40c8f0" />
</svg></body></html>
